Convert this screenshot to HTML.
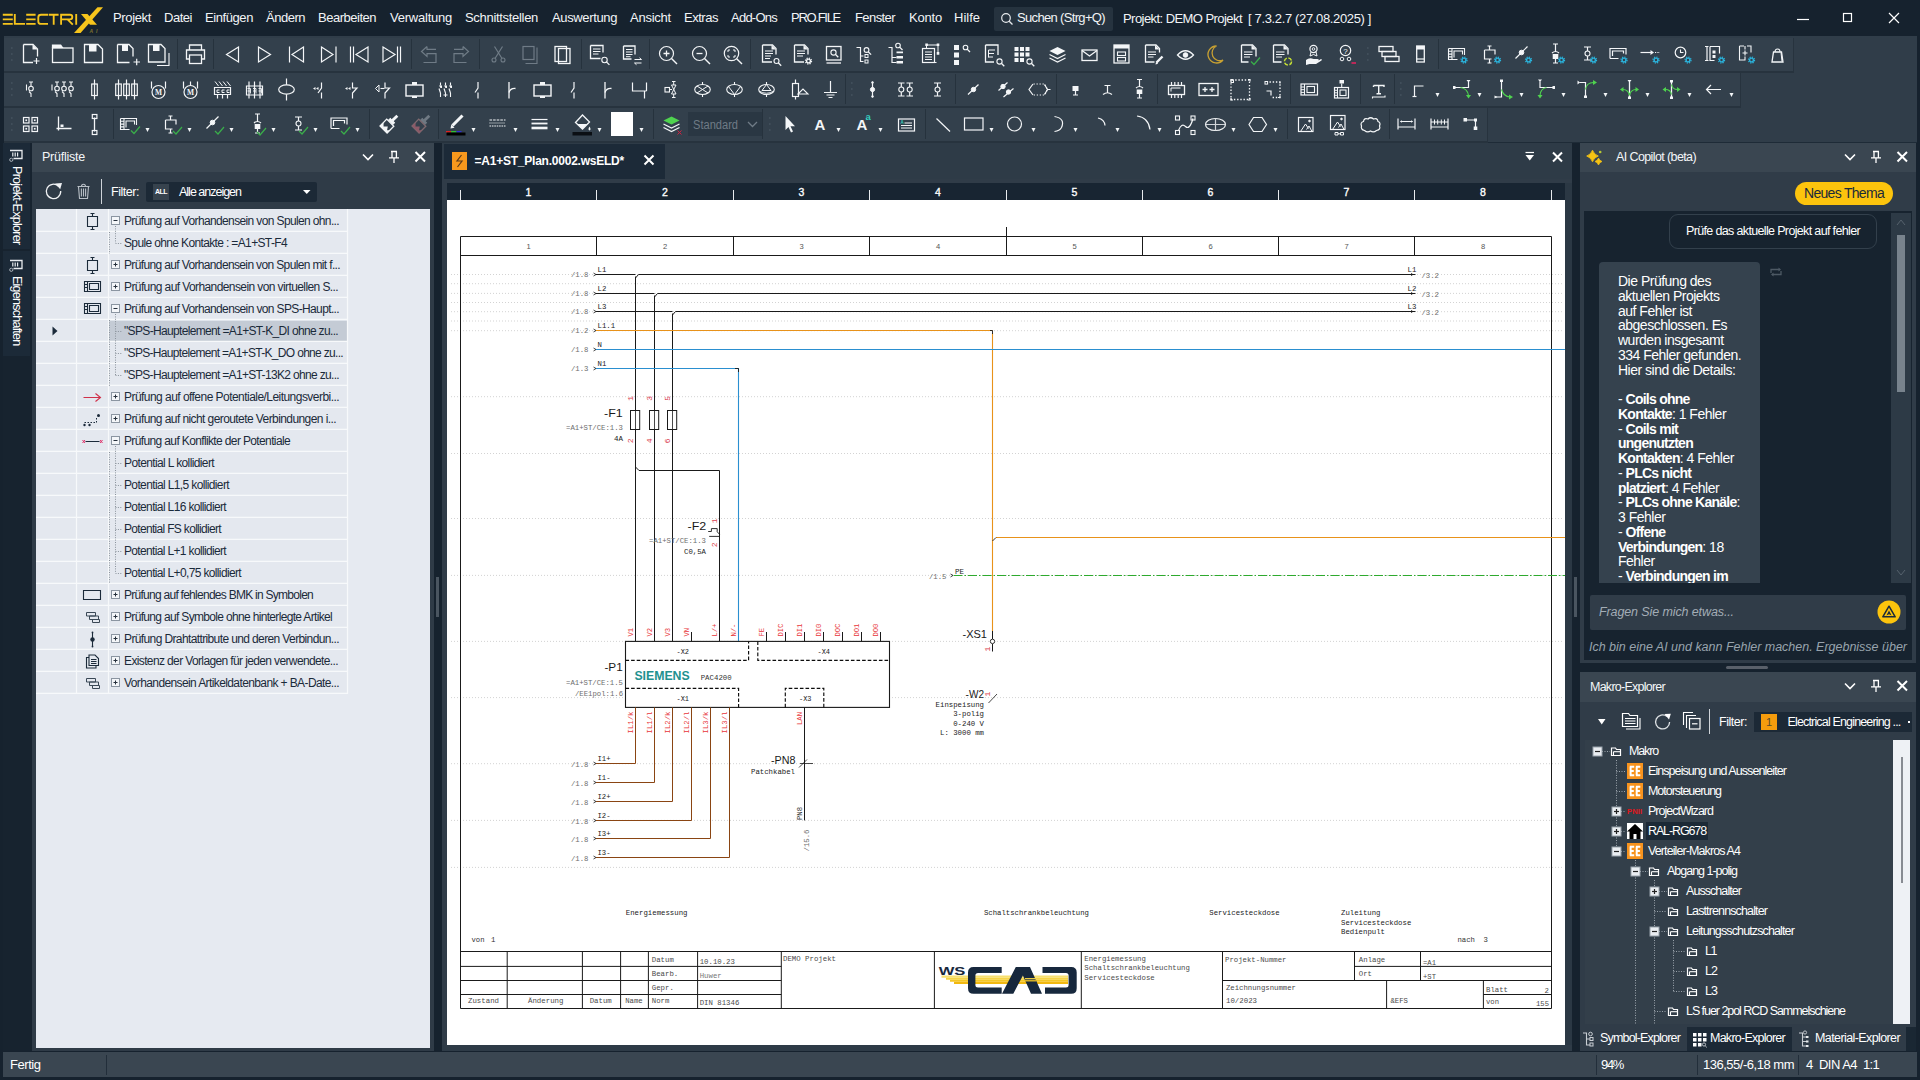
<!DOCTYPE html>
<html><head><meta charset="utf-8"><title>ELECTRIX</title><style>
html,body{margin:0;padding:0;background:#16222e;}
body{width:1920px;height:1080px;overflow:hidden;position:relative;font-family:"Liberation Sans",sans-serif;}
.t{position:absolute;white-space:nowrap;font-family:"Liberation Sans",sans-serif;}
.b{position:absolute;display:block;}
svg{overflow:visible}
svg text{font-family:"Liberation Sans",sans-serif;}
svg text.m{font-family:"Liberation Mono",monospace;}
</style></head><body>
<div class="b" style="left:0px;top:0px;width:1920px;height:36px;background:#16222e;"></div>
<div class="t" style="left:113px;top:8.5px;font-size:13px;line-height:17px;color:#f2f4f6;letter-spacing:-0.352px;">Projekt</div>
<div class="t" style="left:164px;top:8.5px;font-size:13px;line-height:17px;color:#f2f4f6;letter-spacing:-0.470px;">Datei</div>
<div class="t" style="left:205px;top:8.5px;font-size:13px;line-height:17px;color:#f2f4f6;letter-spacing:-0.415px;">Einfügen</div>
<div class="t" style="left:266px;top:8.5px;font-size:13px;line-height:17px;color:#f2f4f6;letter-spacing:-0.487px;">Ändern</div>
<div class="t" style="left:318px;top:8.5px;font-size:13px;line-height:17px;color:#f2f4f6;letter-spacing:-0.488px;">Bearbeiten</div>
<div class="t" style="left:390px;top:8.5px;font-size:13px;line-height:17px;color:#f2f4f6;letter-spacing:-0.232px;">Verwaltung</div>
<div class="t" style="left:465px;top:8.5px;font-size:13px;line-height:17px;color:#f2f4f6;letter-spacing:-0.309px;">Schnittstellen</div>
<div class="t" style="left:552px;top:8.5px;font-size:13px;line-height:17px;color:#f2f4f6;letter-spacing:-0.365px;">Auswertung</div>
<div class="t" style="left:630px;top:8.5px;font-size:13px;line-height:17px;color:#f2f4f6;letter-spacing:-0.233px;">Ansicht</div>
<div class="t" style="left:684px;top:8.5px;font-size:13px;line-height:17px;color:#f2f4f6;letter-spacing:-0.474px;">Extras</div>
<div class="t" style="left:731px;top:8.5px;font-size:13px;line-height:17px;color:#f2f4f6;letter-spacing:-0.758px;">Add-Ons</div>
<div class="t" style="left:791px;top:8.5px;font-size:13px;line-height:17px;color:#f2f4f6;letter-spacing:-1.280px;">PRO.FILE</div>
<div class="t" style="left:855px;top:8.5px;font-size:13px;line-height:17px;color:#f2f4f6;letter-spacing:-0.582px;">Fenster</div>
<div class="t" style="left:909px;top:8.5px;font-size:13px;line-height:17px;color:#f2f4f6;letter-spacing:-0.195px;">Konto</div>
<div class="t" style="left:954px;top:8.5px;font-size:13px;line-height:17px;color:#f2f4f6;letter-spacing:-0.001px;">Hilfe</div>
<div class="b" style="left:994px;top:6.5px;width:119px;height:24px;background:#26333f;border-radius:2px;"></div>
<svg class="b" style="left:999px;top:11px" width="16" height="16" viewBox="0 0 16 16"><circle cx="7" cy="7" r="4.3" fill="none" stroke="#e8ebee" stroke-width="1.2"/><path d="M10.2 10.2L13.5 13.5" stroke="#e8ebee" stroke-width="1.3"/></svg>
<div class="t" style="left:1017px;top:8.5px;font-size:13px;line-height:17px;color:#f2f4f6;letter-spacing:-0.661px;">Suchen (Strg+Q)</div>
<div class="t" style="left:1123px;top:9.5px;font-size:13px;line-height:17px;color:#f2f4f6;letter-spacing:-0.560px;">Projekt: DEMO Projekt</div>
<div class="t" style="left:1248px;top:9.5px;font-size:13px;line-height:17px;color:#f2f4f6;letter-spacing:-0.356px;">[ 7.3.2.7 (27.08.2025) ]</div>
<svg class="b" style="left:1790px;top:8px" width="120" height="22" viewBox="0 0 120 22"><path d="M7 11.5H19" stroke="#fff" stroke-width="1.2"/><rect x="53.5" y="5.5" width="8" height="8" fill="none" stroke="#fff" stroke-width="1.2"/><path d="M99 5L109 15M109 5L99 15" stroke="#fff" stroke-width="1.2"/></svg>
<div class="b" style="left:0px;top:36px;width:1920px;height:105.5px;background:#303d49;"></div>
<div class="b" style="left:0px;top:141.5px;width:1920px;height:1.5px;background:#1e2b37;"></div>
<div class="b" style="left:0px;top:36px;width:4px;height:107px;background:#16222e;"></div>
<div class="b" style="left:1917px;top:36px;width:3px;height:1044px;background:#16222e;"></div>
<div class="b" style="left:4px;top:37.5px;width:1789px;height:33px;background:#33404c;box-shadow:1px 0 0 #27333e,0 2px 0 #27333e,1px 2px 0 #27333e;"></div>
<div class="b" style="left:4px;top:72.5px;width:1736px;height:33.5px;background:#33404c;box-shadow:1px 0 0 #27333e,0 2px 0 #27333e,1px 2px 0 #27333e;"></div>
<div class="b" style="left:4px;top:108px;width:1483px;height:33px;background:#33404c;box-shadow:1px 0 0 #27333e,0 2px 0 #27333e,1px 2px 0 #27333e;"></div>
<svg class="b" style="left:0;top:0" width="1920" height="143" viewBox="0 0 1920 143"><g transform="translate(30.5 54.5)"><path d="M-7 -10H2.5L7 -5.5V2 M-7 -10V8H2.5" fill="none" stroke="#f4f6f8" stroke-width="1.3" /><path d="M2 -10L7 -5H2Z" fill="#f4f6f8"/><path d="M3 6.5H9 M6 3.5V9.5" fill="none" stroke="#f4f6f8" stroke-width="1.2" /></g><g transform="translate(62.5 54.5)"><rect x="-10" y="-6.5" width="20.5" height="14.5" fill="none" stroke="#f4f6f8" stroke-width="1.3"/><path d="M-10.6 -10H-1.5L1 -6.5H-10.6Z" fill="#f4f6f8"/></g><g transform="translate(93.5 54.5)"><path d="M-9 -10H4.5L9 -5.5V8H-9Z" fill="none" stroke="#f4f6f8" stroke-width="1.3" /><path d="M-4.5 -10H3V-3H-4.5Z" fill="#f4f6f8"/></g><g transform="translate(126.5 54.5)"><path d="M-9 -10H2.5L6.5 -6V2 M-9 -10V8H3" fill="none" stroke="#f4f6f8" stroke-width="1.3" /><path d="M-4.5 -10H1.5V-3.5H-4.5Z" fill="#f4f6f8"/><path d="M7 7.5H13.5 M10.2 4.2V10.8" fill="none" stroke="#f4f6f8" stroke-width="1.2" /></g><g transform="translate(158.5 54.5)"><path d="M-10 -10H2.5L6.5 -6V7.5H-10Z" fill="none" stroke="#f4f6f8" stroke-width="1.3" /><path d="M-5.5 -10H1V-3.5H-5.5Z" fill="#f4f6f8"/><path d="M10.5 -1.5V11H-1.5" fill="none" stroke="#f4f6f8" stroke-width="1.1" /></g><g transform="translate(195.5 54.5)"><path d="M-6 -4.5V-9.5H6V-4.5 M-6 4.5H-9V-4.5H9V4.5H6" fill="none" stroke="#f4f6f8" stroke-width="1.3" /><rect x="-6" y="0.5" width="12" height="8.5" fill="none" stroke="#f4f6f8" stroke-width="1.3"/></g><g transform="translate(232.5 54.5)"><path d="M6 -7.5L-6 0L6 7.5Z" fill="none" stroke="#f4f6f8" stroke-width="1.2" /></g><g transform="translate(264.5 54.5)"><path d="M-6 -7.5L6 0L-6 7.5Z" fill="none" stroke="#f4f6f8" stroke-width="1.2" /></g><g transform="translate(296.5 54.5)"><path d="M-7 -8V8" fill="none" stroke="#f4f6f8" stroke-width="1.2" /><path d="M7 -7.5L-4.5 0L7 7.5Z" fill="none" stroke="#f4f6f8" stroke-width="1.2" /></g><g transform="translate(328.5 54.5)"><path d="M7.5 -8V8" fill="none" stroke="#f4f6f8" stroke-width="1.2" /><path d="M-7 -7.5L4.5 0L-7 7.5Z" fill="none" stroke="#f4f6f8" stroke-width="1.2" /></g><g transform="translate(359.5 54.5)"><path d="M-9 -8V8M-6 -8V8" fill="none" stroke="#f4f6f8" stroke-width="1.2" /><path d="M8.5 -7.5L-3.5 0L8.5 7.5Z" fill="none" stroke="#f4f6f8" stroke-width="1.2" /></g><g transform="translate(391.5 54.5)"><path d="M9 -8V8M6 -8V8" fill="none" stroke="#f4f6f8" stroke-width="1.2" /><path d="M-8.5 -7.5L3.5 0L-8.5 7.5Z" fill="none" stroke="#f4f6f8" stroke-width="1.2" /></g><g transform="translate(429.5 54.5)"><path d="M-2.5 -8L-8 -3L-2.5 2V-0.8H6.5V8H-6 M-2.5 -8V-5.2H6.5" fill="none" stroke="#6f7b86" stroke-width="1.2" /></g><g transform="translate(460.5 54.5)"><path d="M2.5 -8L8 -3L2.5 2V-0.8H-6.5V8H6 M2.5 -8V-5.2H-6.5" fill="none" stroke="#6f7b86" stroke-width="1.2" /></g><g transform="translate(498.5 54.5)"><path d="M-4 -8L3.5 4 M4 -8L-3.5 4" fill="none" stroke="#6f7b86" stroke-width="1.2" /><circle cx="-4.5" cy="5.5" r="2" fill="none" stroke="#6f7b86" stroke-width="1.1"/><circle cx="4.5" cy="5.5" r="2" fill="none" stroke="#6f7b86" stroke-width="1.1"/></g><g transform="translate(530.5 54.5)"><rect x="-7.5" y="-8" width="11" height="13" fill="none" stroke="#6f7b86" stroke-width="1.2"/><path d="M6.5 -7V9H-5" fill="none" stroke="#6f7b86" stroke-width="1.1" /></g><g transform="translate(562.5 54.5)"><rect x="-7.5" y="-8" width="11.5" height="15" fill="none" stroke="#f4f6f8" stroke-width="1.3"/><rect x="-4" y="-6" width="11.5" height="15" fill="none" stroke="#f4f6f8" stroke-width="1.3"/></g><g transform="translate(598.5 54.5)"><path d="M-8 -9H4.5V-2 M-8 -9V4H2" fill="none" stroke="#f4f6f8" stroke-width="1.3" /><path d="M-5.5 -5.5H2M-5.5 -3H2M-5.5 -0.5H0" fill="none" stroke="#f4f6f8" stroke-width="1" /><circle cx="6" cy="5.5" r="2.7" fill="none" stroke="#f4f6f8" stroke-width="1.1"/><path d="M7.89 7.39L10.899999999999999 10.399999999999999" fill="none" stroke="#f4f6f8" stroke-width="1.3" /></g><g transform="translate(631.5 54.5)"><path d="M-8 -8.5H3.5V0 M-8 -8.5V4.5H0" fill="none" stroke="#f4f6f8" stroke-width="1.3" /><path d="M-5.5 -5H1M-5.5 -2.5H1M-5.5 0H1M-5.5 2.2H-1" fill="none" stroke="#f4f6f8" stroke-width="1" /><path d="M3 5H10M8 3.3L10 5 M10 8.5H3M5 10.2L3 8.5" fill="none" stroke="#f4f6f8" stroke-width="1" /></g><g transform="translate(667.5 54.5)"><circle cx="-1" cy="-1" r="7" fill="none" stroke="#f4f6f8" stroke-width="1.2"/><path d="M4 4L9.5 9.5" fill="none" stroke="#f4f6f8" stroke-width="1.4" /><path d="M-4 -1H2M-1 -4V2" fill="none" stroke="#f4f6f8" stroke-width="1.3" /></g><g transform="translate(700.5 54.5)"><circle cx="-1" cy="-1" r="7" fill="none" stroke="#f4f6f8" stroke-width="1.2"/><path d="M4 4L9.5 9.5" fill="none" stroke="#f4f6f8" stroke-width="1.4" /><path d="M-4 -1H2" fill="none" stroke="#f4f6f8" stroke-width="1.3" /></g><g transform="translate(732.5 54.5)"><circle cx="-1" cy="-1" r="7.2" fill="none" stroke="#f4f6f8" stroke-width="1.2"/><path d="M4.2 4.2L9.5 9.5" fill="none" stroke="#f4f6f8" stroke-width="1.4" /><path d="M-4.5 -2.5V-4.5H-2.5 M0.5 -4.5H2.5V-2.5 M2.5 0.5V2.5H0.5 M-2.5 2.5H-4.5V0.5" fill="none" stroke="#f4f6f8" stroke-width="1" /></g><g transform="translate(770.5 54.5)"><path d="M-8 -9.5H2L5.5 -6V0 M-8 -9.5V7.5H1.5" fill="none" stroke="#f4f6f8" stroke-width="1.3" /><path d="M1 -9.5L5.5 -5H1Z" fill="#f4f6f8"/><path d="M-5.5 -3.5H2.5M-5.5 -1H2.5M-5.5 1.5H0.5M-5.5 4H-0.5" fill="none" stroke="#f4f6f8" stroke-width="1" /><circle cx="6" cy="6.5" r="2.5" fill="none" stroke="#f4f6f8" stroke-width="1.1"/><path d="M7.75 8.25L10.7 11.2" fill="none" stroke="#f4f6f8" stroke-width="1.3" /></g><g transform="translate(802.5 54.5)"><path d="M-8 -9.5H2L5.5 -6V0 M-8 -9.5V7.5H1.5" fill="none" stroke="#f4f6f8" stroke-width="1.3" /><path d="M1 -9.5L5.5 -5H1Z" fill="#f4f6f8"/><path d="M-5.5 -3.5H2.5M-5.5 -1H2.5M-5.5 1.5H0.5" fill="none" stroke="#f4f6f8" stroke-width="1" /><circle cx="6" cy="6.5" r="1.9" fill="none" stroke="#f4f6f8" stroke-width="1.4"/><circle cx="6" cy="6.5" r="3.0" fill="none" stroke="#f4f6f8" stroke-width="1.3" stroke-dasharray="1.18 1.18"/></g><g transform="translate(833.5 54.5)"><rect x="-7" y="-8" width="14.5" height="13.5" fill="none" stroke="#f4f6f8" stroke-width="1.3"/><path d="M-7 8.5H7.5" fill="none" stroke="#f4f6f8" stroke-width="1.3" /><circle cx="0" cy="-2" r="2.6" fill="none" stroke="#f4f6f8" stroke-width="1.1"/><path d="M1.8199999999999998 -0.18000000000000016L4.800000000000001 2.8000000000000003" fill="none" stroke="#f4f6f8" stroke-width="1.3" /></g><g transform="translate(863.5 54.5)"><path d="M-7 -7H-3V7H0 M-3 1.5H0" fill="none" stroke="#f4f6f8" stroke-width="1.2" /><circle cx="3" cy="-4.5" r="2.4" fill="none" stroke="#f4f6f8" stroke-width="1.1"/><path d="M4.68 -2.8200000000000003L7.6000000000000005 0.10000000000000009" fill="none" stroke="#f4f6f8" stroke-width="1.3" /><rect x="1.5" y="0" width="3" height="3" fill="none" stroke="#f4f6f8" stroke-width="1"/><rect x="1.5" y="5.5" width="3" height="3" fill="none" stroke="#f4f6f8" stroke-width="1"/></g><g transform="translate(895.5 54.5)"><path d="M-7 -7H-3.5V8H1 M-3.5 3H1" fill="none" stroke="#f4f6f8" stroke-width="1.2" /><circle cx="2.5" cy="-9" r="2.3" fill="none" stroke="#f4f6f8" stroke-width="1.1"/><path d="M4.109999999999999 -7.390000000000001L7.0 -4.5" fill="none" stroke="#f4f6f8" stroke-width="1.3" /><path d="M1 1.5H7.5V4H1Z M1 6.5H7.5V9H1Z M1 -3H7.5V-1.2H1Z" fill="#f4f6f8"/></g><g transform="translate(930.5 54.5)"><rect x="-8" y="-6" width="12" height="14" fill="none" stroke="#f4f6f8" stroke-width="1.2"/><path d="M-5.5 -2.5H1.5M-5.5 0H1.5M-5.5 2.5H1.5M-5.5 5H1.5" fill="none" stroke="#f4f6f8" stroke-width="1" /><path d="M-4 -6V-9.5H7.5V-1" fill="none" stroke="#f4f6f8" stroke-width="1" /><path d="M-5.2 -11H-2.6V-8.4H-5.2Z M6.2 -11H8.8V-8.4H6.2Z M6.2 -2.5H8.8V0.2H6.2Z" fill="#f4f6f8"/><path d="M6 8H4.5 M-6 -8" fill="none" stroke="#f4f6f8" stroke-width="1" /></g><g transform="translate(961.5 54.5)"><path d="M-7.5 -9.5H-2.5V-4.5H-7.5Z M-7.5 -2H-2.5V3H-7.5Z M-7.5 5.5H-2.5V10.5H-7.5Z" fill="#f4f6f8"/><circle cx="4" cy="-7" r="2.3" fill="none" stroke="#f4f6f8" stroke-width="1.1"/><path d="M5.609999999999999 -5.390000000000001L8.5 -2.5" fill="none" stroke="#f4f6f8" stroke-width="1.3" /></g><g transform="translate(993.5 54.5)"><path d="M-8 -9.5H4.5V0.5 M-8 -9.5V7.5H0.5" fill="none" stroke="#f4f6f8" stroke-width="1.3" /><path d="M-5 -4.5H1.5 M-5 -4.5V3 M-5 -1H0.5 M-5 2.5H-0.5" fill="none" stroke="#f4f6f8" stroke-width="1" /><circle cx="6" cy="7" r="2.6" fill="none" stroke="#f4f6f8" stroke-width="1.1"/><path d="M7.82 8.82L10.8 11.8" fill="none" stroke="#f4f6f8" stroke-width="1.3" /></g><g transform="translate(1023.5 54.5)"><path d="M-9 -7.5H-5V-3.5H-9Z M-3.5 -7.5H0.5V-3.5H-3.5Z M2 -7.5H6V-3.5H2Z M-9 -2H-5V2H-9Z M-3.5 -2H0.5V2H-3.5Z M2 -2H6V2H2Z M-9 3.5H-5V7.5H-9Z M-3.5 3.5H0.5V7.5H-3.5Z" fill="#f4f6f8"/><circle cx="6" cy="7" r="2.6" fill="none" stroke="#f4f6f8" stroke-width="1.1"/><path d="M7.82 8.82L10.8 11.8" fill="none" stroke="#f4f6f8" stroke-width="1.3" /></g><g transform="translate(1057.5 54.5)"><path d="M0 -7.5L8 -3.5L0 0.5L-8 -3.5Z" fill="#f4f6f8"/><path d="M-8 0L0 4L8 0 M-8 3.5L0 7.5L8 3.5" fill="none" stroke="#f4f6f8" stroke-width="1.2" /></g><g transform="translate(1089.5 54.5)"><rect x="-7.5" y="-4.5" width="15" height="10.5" fill="none" stroke="#f4f6f8" stroke-width="1.3"/><path d="M-7.5 -4L0 1.5L7.5 -4" fill="none" stroke="#f4f6f8" stroke-width="1.3" /></g><g transform="translate(1121.5 54.5)"><rect x="-7.5" y="-9.5" width="15" height="18" fill="none" stroke="#f4f6f8" stroke-width="1.3"/><path d="M-7.5 -9.5H7.5V-6H-7.5Z" fill="#f4f6f8"/><rect x="-4" y="-2.5" width="8" height="3.5" fill="none" stroke="#f4f6f8" stroke-width="1.1"/><rect x="-4" y="3" width="8" height="3.5" fill="none" stroke="#f4f6f8" stroke-width="1.1"/></g><g transform="translate(1153.5 54.5)"><path d="M-8 -9.5H2.5L6 -6V-2 M-8 -9.5V7.5H1" fill="none" stroke="#f4f6f8" stroke-width="1.3" /><path d="M1.5 -9.5L6 -5H1.5Z" fill="#f4f6f8"/><path d="M-5.5 -2.5H2.5M-5.5 0H2.5M-5.5 2.5H0" fill="none" stroke="#f4f6f8" stroke-width="1" /><path d="M3 8L9 2" fill="none" stroke="#f4f6f8" stroke-width="2.4" /><path d="M2 10L2.6 7.2L4.6 9.2Z" fill="#f4f6f8"/></g><g transform="translate(1185.5 54.5)"><path d="M-8 0.5Q0 -8 8 0.5Q0 9 -8 0.5Z" fill="none" stroke="#f4f6f8" stroke-width="1.3" /><circle cx="0" cy="0.5" r="2.3" fill="#f4f6f8" stroke="#f4f6f8" stroke-width="1"/></g><g transform="translate(1215.5 54.5)"><path d="M1 -8.5A8.5 8.5 0 1 0 7.5 5.5A7.5 7.5 0 0 1 1 -8.5Z" fill="none" stroke="#c9a132" stroke-width="1.3" /></g><g transform="translate(1249.5 54.5)"><path d="M-8 -9.5H3L6.5 -6V2 M-8 -9.5V7.5H-1" fill="none" stroke="#f4f6f8" stroke-width="1.3" /><path d="M2 -9.5L6.5 -5H2Z" fill="#f4f6f8"/><path d="M-5.5 -2.5H3M-5.5 0H3M-5.5 2.5H0.5" fill="none" stroke="#f4f6f8" stroke-width="1" /><path d="M1.5 7L4.5 10L10.5 3" fill="none" stroke="#3aae4a" stroke-width="1.2" /></g><g transform="translate(1281.5 54.5)"><path d="M-8 -9.5H3L6.5 -6V0 M-8 -9.5V7.5H0" fill="none" stroke="#f4f6f8" stroke-width="1.3" /><path d="M2 -9.5L6.5 -5H2Z" fill="#f4f6f8"/><path d="M-5.5 -2.5H3M-5.5 0H3M-5.5 2.5H0.5" fill="none" stroke="#f4f6f8" stroke-width="1" /><circle cx="6.5" cy="7" r="3.6" fill="none" stroke="#c6e035" stroke-width="1.5" stroke-dasharray="4 1.65"/></g><g transform="translate(1313.5 54.5)"><circle cx="0" cy="-5.5" r="3.6" fill="none" stroke="#f4f6f8" stroke-width="1.2"/><circle cx="0" cy="-5.5" r="1.3" fill="none" stroke="#f4f6f8" stroke-width="0.9"/><path d="M-2.5 -2.5L-3.5 1.5L0 0L3.5 1.5L2.5 -2.5" fill="none" stroke="#f4f6f8" stroke-width="1" /><path d="M-7.5 5.5Q-4 2.5 0 4.5H4Q6 4.5 5 6L7.5 4.5Q9 4.5 8 6L2.5 9.5H-4L-7.5 10.5Z" fill="#f4f6f8"/></g><g transform="translate(1346.5 54.5)"><circle cx="-1" cy="-4" r="5.2" fill="none" stroke="#f4f6f8" stroke-width="1.2"/><text x="-1" y="-1" font-size="8" fill="#f4f6f8" text-anchor="middle">?</text><circle cx="-4.5" cy="4.5" r="1.8" fill="none" stroke="#f4f6f8" stroke-width="1"/><circle cx="2.5" cy="4.5" r="1.8" fill="none" stroke="#f4f6f8" stroke-width="1"/><path d="M5 8.5H9.5" fill="none" stroke="#e0245e" stroke-width="1.6" /></g><path d="M1367 48h1.6M1367 54h1.6M1367 60h1.6" stroke="#46535f" stroke-width="1.6"/><g transform="translate(1388.5 54.5)"><rect x="-9.5" y="-8" width="14" height="5" fill="none" stroke="#f4f6f8" stroke-width="1.3"/><rect x="-6.5" y="-3" width="14" height="5" fill="none" stroke="#f4f6f8" stroke-width="1.3"/><rect x="-3.5" y="2" width="14" height="5" fill="none" stroke="#f4f6f8" stroke-width="1.3"/></g><g transform="translate(1420.5 54.5)"><rect x="-3.8" y="-8.5" width="7.6" height="16" fill="none" stroke="#f4f6f8" stroke-width="1.3"/><path d="M-3.8 -8.5H3.8V-5H-3.8Z" fill="#f4f6f8"/><path d="M-3.8 4.5H3.8" fill="none" stroke="#f4f6f8" stroke-width="1.2" /></g><g transform="translate(1457.5 54.5)"><path d="M-9 -6H7V0.5 M-9 -6V5H0 M-5.5 -6V5 M-9 -3.2H-5.5M-9 -0.4H-5.5M-9 2.4H-5.5 M-3.5 3V-3.5H5V0" fill="none" stroke="#f4f6f8" stroke-width="1.1" /><circle cx="6.5" cy="5.5" r="1.9" fill="none" stroke="#2bb3dc" stroke-width="1.4"/><circle cx="6.5" cy="5.5" r="3.0" fill="none" stroke="#2bb3dc" stroke-width="1.3" stroke-dasharray="1.18 1.18"/></g><g transform="translate(1491.5 54.5)"><path d="M-7 -4.5H3.5V0 M-7 -4.5V4.5H0 M-2 -8.5V-4.5 M-2 4.5V8.5 M-4 -8.5H0 M-4 8.5H0" fill="none" stroke="#f4f6f8" stroke-width="1.2" /><circle cx="6" cy="5.5" r="1.9" fill="none" stroke="#2bb3dc" stroke-width="1.4"/><circle cx="6" cy="5.5" r="3.0" fill="none" stroke="#2bb3dc" stroke-width="1.3" stroke-dasharray="1.18 1.18"/></g><g transform="translate(1523.5 54.5)"><path d="M-8 4L4 -8" fill="none" stroke="#f4f6f8" stroke-width="1.2" /><circle cx="-2" cy="-2" r="2.3" fill="#f4f6f8" stroke="#f4f6f8" stroke-width="1"/><circle cx="5" cy="5.5" r="1.9" fill="none" stroke="#2bb3dc" stroke-width="1.4"/><circle cx="5" cy="5.5" r="3.0" fill="none" stroke="#2bb3dc" stroke-width="1.3" stroke-dasharray="1.18 1.18"/></g><g transform="translate(1555.5 54.5)"><path d="M-2.5 -10.5H2.5 M0 -10.5V-3 M-3.5 -1.5Q0 -4.5 3.5 -1.5 M0 4V8 M-2.5 8.5H2.5" fill="none" stroke="#f4f6f8" stroke-width="1.2" /><path d="M-2.8 -0.5H2.8V4.5H-2.8Z" fill="#f4f6f8"/><circle cx="6" cy="5.5" r="1.9" fill="none" stroke="#2bb3dc" stroke-width="1.4"/><circle cx="6" cy="5.5" r="3.0" fill="none" stroke="#2bb3dc" stroke-width="1.3" stroke-dasharray="1.18 1.18"/></g><g transform="translate(1587.5 54.5)"><path d="M-3.5 -7.5H3.5 M0 -7.5V-3.5 M0 1.5V5.5 M-3.5 5.5H3.5" fill="none" stroke="#f4f6f8" stroke-width="1.2" /><circle cx="0" cy="-1" r="2.5" fill="none" stroke="#f4f6f8" stroke-width="1.1"/><circle cx="6" cy="5.5" r="1.9" fill="none" stroke="#2bb3dc" stroke-width="1.4"/><circle cx="6" cy="5.5" r="3.0" fill="none" stroke="#2bb3dc" stroke-width="1.3" stroke-dasharray="1.18 1.18"/></g><g transform="translate(1618.5 54.5)"><path d="M-8.5 4V-6H7.5V0 M-8.5 4H0 M-6 1.5V-3.5H5V-1" fill="none" stroke="#f4f6f8" stroke-width="1.2" /><circle cx="5.5" cy="5.5" r="1.9" fill="none" stroke="#2bb3dc" stroke-width="1.4"/><circle cx="5.5" cy="5.5" r="3.0" fill="none" stroke="#2bb3dc" stroke-width="1.3" stroke-dasharray="1.18 1.18"/></g><g transform="translate(1650.5 54.5)"><path d="M-10 -2H0.5" fill="none" stroke="#f4f6f8" stroke-width="1.2" /><path d="M0 -4.5L3.5 -2L0 0.5Z" fill="#f4f6f8"/><path d="M4.5 -2H9.5" fill="none" stroke="#f4f6f8" stroke-width="1.1" stroke-dasharray="1.2 1.2"/><circle cx="5.5" cy="5.5" r="1.9" fill="none" stroke="#2bb3dc" stroke-width="1.4"/><circle cx="5.5" cy="5.5" r="3.0" fill="none" stroke="#2bb3dc" stroke-width="1.3" stroke-dasharray="1.18 1.18"/></g><g transform="translate(1682.5 54.5)"><circle cx="-2" cy="-2" r="5.3" fill="none" stroke="#f4f6f8" stroke-width="1.2"/><path d="M-2 -5V-2H1" fill="none" stroke="#f4f6f8" stroke-width="1.1" /><circle cx="5.5" cy="5.5" r="1.9" fill="none" stroke="#2bb3dc" stroke-width="1.4"/><circle cx="5.5" cy="5.5" r="3.0" fill="none" stroke="#2bb3dc" stroke-width="1.3" stroke-dasharray="1.18 1.18"/></g><g transform="translate(1714.5 54.5)"><path d="M-9.5 -8H-6 M-9.5 6H-6 M-7.5 -8V6 M-4.5 -8H5V-1 M-4.5 -8V6H0" fill="none" stroke="#f4f6f8" stroke-width="1.2" /><path d="M-2 -4H1V-1H-2Z M-2 0.5H1V3.5H-2Z" fill="#f4f6f8"/><circle cx="7" cy="5.5" r="1.9" fill="none" stroke="#2bb3dc" stroke-width="1.4"/><circle cx="7" cy="5.5" r="3.0" fill="none" stroke="#2bb3dc" stroke-width="1.3" stroke-dasharray="1.18 1.18"/></g><g transform="translate(1746.5 54.5)"><path d="M-7 -8.5H-2.5 M0.5 -8.5H4.5V-2 M-7 -8.5V5.5H-1 M-1.5 -8.5V-5 M-1.5 2V5.5" fill="none" stroke="#f4f6f8" stroke-width="1.1" /><path d="M-4 -1.5H1 M-1.5 -4V1" fill="none" stroke="#f4f6f8" stroke-width="1.1" /><circle cx="5" cy="5.5" r="1.9" fill="none" stroke="#2bb3dc" stroke-width="1.4"/><circle cx="5" cy="5.5" r="3.0" fill="none" stroke="#2bb3dc" stroke-width="1.3" stroke-dasharray="1.18 1.18"/></g><g transform="translate(1777.5 54.5)"><path d="M-4 -2.5H4L5.5 7.5H-5.5Z" fill="none" stroke="#f4f6f8" stroke-width="1.3" /><path d="M-2.5 -2.5C-2.5 -6.5 2.5 -6.5 2.5 -2.5" fill="none" stroke="#f4f6f8" stroke-width="1.1" /><path d="M3.5 -2L4.5 7" fill="none" stroke="#f4f6f8" stroke-width="1" /></g><path d="M177.5 39V69" stroke="#26323d" stroke-width="1"/><path d="M213.5 39V69" stroke="#26323d" stroke-width="1"/><path d="M411.5 39V69" stroke="#26323d" stroke-width="1"/><path d="M479.5 39V69" stroke="#26323d" stroke-width="1"/><path d="M581.5 39V69" stroke="#26323d" stroke-width="1"/><path d="M649.5 39V69" stroke="#26323d" stroke-width="1"/><path d="M750.5 39V69" stroke="#26323d" stroke-width="1"/><path d="M1438.5 39V69" stroke="#26323d" stroke-width="1"/><path d="M11 48h1.6M11 54h1.6M11 60h1.6" stroke="#46535f" stroke-width="1.6"/><g transform="translate(30.5 89.5)"><path d="M-4 -5V1" fill="none" stroke="#f4f6f8" stroke-width="1.1" /><circle cx="0.5" cy="-1" r="2.3" fill="none" stroke="#f4f6f8" stroke-width="1.1"/><path d="M0.5 -7.5V-3.3 M-1.5 -7.5H2.5 M-1.5 2L0.5 4V7.5" fill="none" stroke="#f4f6f8" stroke-width="1.1" /></g><g transform="translate(62.5 89.5)"><path d="M-10.5 -5V1" fill="none" stroke="#f4f6f8" stroke-width="1.1" /><circle cx="-5.5" cy="-1" r="2.3" fill="none" stroke="#f4f6f8" stroke-width="1.1"/><path d="M-5.5 -7.5V-3.3 M-7.5 -7.5H-3.5 M-7.5 2L-5.5 4V7.5" fill="none" stroke="#f4f6f8" stroke-width="1.1" /><circle cx="1.5" cy="-1" r="2.3" fill="none" stroke="#f4f6f8" stroke-width="1.1"/><path d="M1.5 -7.5V-3.3 M-0.5 -7.5H3.5 M-0.5 2L1.5 4V7.5" fill="none" stroke="#f4f6f8" stroke-width="1.1" /><circle cx="8.5" cy="-1" r="2.3" fill="none" stroke="#f4f6f8" stroke-width="1.1"/><path d="M8.5 -7.5V-3.3 M6.5 -7.5H10.5 M6.5 2L8.5 4V7.5" fill="none" stroke="#f4f6f8" stroke-width="1.1" /></g><g transform="translate(94.5 89.5)"><rect x="-2.8" y="-5.5" width="5.6" height="11.5" fill="none" stroke="#f4f6f8" stroke-width="1.2"/><path d="M0 -10V10" fill="none" stroke="#f4f6f8" stroke-width="1.2" /></g><g transform="translate(126.5 89.5)"><rect x="-10.8" y="-5.5" width="5.6" height="11.5" fill="none" stroke="#f4f6f8" stroke-width="1.2"/><path d="M-8 -10V10" fill="none" stroke="#f4f6f8" stroke-width="1.2" /><rect x="-2.8" y="-5.5" width="5.6" height="11.5" fill="none" stroke="#f4f6f8" stroke-width="1.2"/><path d="M0 -10V10" fill="none" stroke="#f4f6f8" stroke-width="1.2" /><rect x="5.2" y="-5.5" width="5.6" height="11.5" fill="none" stroke="#f4f6f8" stroke-width="1.2"/><path d="M8 -10V10" fill="none" stroke="#f4f6f8" stroke-width="1.2" /></g><g transform="translate(158.5 89.5)"><circle cx="0" cy="2.5" r="6.5" fill="none" stroke="#f4f6f8" stroke-width="1.2"/><path d="M-7 -8V-1 M7 -8V-1" fill="none" stroke="#f4f6f8" stroke-width="1.2" /><text x="0" y="5.5" font-size="7.5" font-family="Liberation Serif,serif" font-weight="bold" fill="#f4f6f8" text-anchor="middle" style="font-family:'Liberation Serif',serif">M</text></g><g transform="translate(190.5 89.5)"><circle cx="0" cy="2.5" r="6.5" fill="none" stroke="#f4f6f8" stroke-width="1.2"/><path d="M-7 -8V-1 M7 -8V-1" fill="none" stroke="#f4f6f8" stroke-width="1.2" /><text x="0" y="5.5" font-size="7.5" font-family="Liberation Serif,serif" font-weight="bold" fill="#f4f6f8" text-anchor="middle" style="font-family:'Liberation Serif',serif">M</text><path d="M0 -8V-4" fill="none" stroke="#f4f6f8" stroke-width="1.2" /></g><g transform="translate(222.5 89.5)"><path d="M-8 -2H8V5H-8Z" fill="none" stroke="#f4f6f8" stroke-width="1.2" /><path d="M-5.5 0.5H-3M-0.5 0.5H2M4.5 0.5H7 M-5.5 0.5V3H-3 M-0.5 0.5V3H2 M4.5 0.5V3H7" fill="none" stroke="#f4f6f8" stroke-width="1" /><path d="M-5 5V9 M0 5V9 M5 5V9" fill="none" stroke="#f4f6f8" stroke-width="1.2" /><path d="M-7.5 -8L-4 -3.5 M-3.5 -8L0 -3.5 M0.5 -8L4 -3.5 M4.5 -8L8 -3.5" fill="none" stroke="#f4f6f8" stroke-width="1" /></g><g transform="translate(254.5 89.5)"><path d="M-8 -3.5H8V5.5H-8Z" fill="none" stroke="#f4f6f8" stroke-width="1.2" /><path d="M-5.5 -8V9 M0 -8V9 M5.5 -8V9" fill="none" stroke="#f4f6f8" stroke-width="1.2" /><path d="M-7 -1H-4V1.5H-7M-4 1.5V4 M-1.5 -1H1.5V1.5H-1.5M1.5 1.5V4 M4 -1H7V1.5H4M7 1.5V4" fill="none" stroke="#f4f6f8" stroke-width="0.9" /></g><g transform="translate(286.5 89.5)"><ellipse cx="0" cy="0" rx="7.8" ry="4.7" fill="none" stroke="#f4f6f8" stroke-width="1.2"/><path d="M0 -11V-4.7 M0 4.7V11" fill="none" stroke="#f4f6f8" stroke-width="1.2" /></g><g transform="translate(318.5 89.5)"><path d="M3 -7V-1.5L-0.5 3.5 M3 3V9" fill="none" stroke="#f4f6f8" stroke-width="1.2" /><path d="M-5.5 -1L-3 -2.5V0.5Z M-2.5 -1L0 -2.5V0.5Z" fill="#f4f6f8"/></g><g transform="translate(350.5 89.5)"><path d="M2 -7V-1.5H6.5L2 3.5V9" fill="none" stroke="#f4f6f8" stroke-width="1.2" /><path d="M-5.5 -1L-3 -2.5V0.5Z M-2.5 -1L0 -2.5V0.5Z" fill="#f4f6f8"/></g><g transform="translate(382.5 89.5)"><path d="M2.5 -7V-1.5H7L2.5 3.5V9" fill="none" stroke="#f4f6f8" stroke-width="1.2" /><path d="M-2 -1H2" fill="none" stroke="#f4f6f8" stroke-width="1.1" /><path d="M-7 -1L-3.5 -4.5L-3.5 2.5Z" fill="none" stroke="#f4f6f8" stroke-width="1" /></g><g transform="translate(414.5 89.5)"><rect x="-8.5" y="-4.5" width="17" height="11" fill="none" stroke="#f4f6f8" stroke-width="1.4"/><path d="M-2.5 -7.5H2.5V-4.5H-2.5Z M-2.5 6.5H2.5V8.5H-2.5Z" fill="#f4f6f8"/></g><g transform="translate(446.5 89.5)"><path d="M-6 -7V-4 M-1 -7V-4 M4 -7V-4 M-6 3.5V7.5 M-1 3.5V7.5 M4 3.5V7.5 M-7.5 -1L-6 3.5 M-2.5 -1L-1 3.5 M2.5 -1L4 3.5" fill="none" stroke="#f4f6f8" stroke-width="1.1" /><path d="M-7.5 -4H-4.5V-1.5H-6Z M-2.5 -4H0.5V-1.5H-1Z M2.5 -4H5.5V-1.5H4Z" fill="#f4f6f8"/><path d="M-3 5.5H1 M-1 3.5V7.5" fill="none" stroke="#f4f6f8" stroke-width="1" /></g><g transform="translate(477.5 89.5)"><path d="M0.5 -7.5V-1.5L-2.5 3 M0.5 3V9" fill="none" stroke="#f4f6f8" stroke-width="1.2" /></g><g transform="translate(511.5 89.5)"><path d="M-2.5 -7.5V9" fill="none" stroke="#f4f6f8" stroke-width="1.3" /><path d="M-2.5 3Q-1 -1.5 4 -1" fill="none" stroke="#f4f6f8" stroke-width="1.3" /></g><g transform="translate(542.5 89.5)"><rect x="-8.5" y="-4.5" width="17" height="11" fill="none" stroke="#f4f6f8" stroke-width="1.4"/><path d="M-2.5 -7.5H2.5V-4.5H-2.5Z M-2.5 6.5H2.5V8.5H-2.5Z" fill="#f4f6f8"/></g><g transform="translate(573.5 89.5)"><path d="M0.5 -7.5V-1.5L-2.5 3 M0.5 3V9" fill="none" stroke="#f4f6f8" stroke-width="1.2" /></g><g transform="translate(607.5 89.5)"><path d="M-2.5 -7.5V9" fill="none" stroke="#f4f6f8" stroke-width="1.3" /><path d="M-2.5 3Q-1 -1.5 4 -1" fill="none" stroke="#f4f6f8" stroke-width="1.3" /></g><g transform="translate(639.5 89.5)"><path d="M-7 -7V1.5H7 M7 -7V1.5 M5 1.5V9" fill="none" stroke="#f4f6f8" stroke-width="1.2" /></g><g transform="translate(670.5 89.5)"><rect x="-5.5" y="-2" width="4.5" height="4.5" fill="none" stroke="#f4f6f8" stroke-width="1.1"/><path d="M-1 0H1.5 M1 -4.5L5.5 4.5H1L5.5 -4.5Z M3.2 -8V-4.5 M3.2 4.5V8 M1.5 -8H5M1.5 8H5" fill="none" stroke="#f4f6f8" stroke-width="1" /></g><g transform="translate(702.5 89.5)"><ellipse cx="0" cy="0" rx="7.8" ry="5" fill="none" stroke="#f4f6f8" stroke-width="1.1"/><path d="M0 -7.5V-5 M0 5V7.5" fill="none" stroke="#f4f6f8" stroke-width="1.1" /><path d="M-5.5 -3.5L5.5 3.5 M5.5 -3.5L-5.5 3.5" fill="none" stroke="#f4f6f8" stroke-width="1" /></g><g transform="translate(734.5 89.5)"><ellipse cx="0" cy="0" rx="7.8" ry="5" fill="none" stroke="#f4f6f8" stroke-width="1.1"/><path d="M0 -7.5V-5 M0 5V7.5" fill="none" stroke="#f4f6f8" stroke-width="1.1" /><path d="M-6 -3L0 5L6 -3" fill="none" stroke="#f4f6f8" stroke-width="1" /></g><g transform="translate(766.5 89.5)"><ellipse cx="0" cy="0" rx="7.8" ry="5" fill="none" stroke="#f4f6f8" stroke-width="1.1"/><path d="M0 -7.5V-5 M0 5V7.5" fill="none" stroke="#f4f6f8" stroke-width="1.1" /><path d="M-4.5 1L0 -5L4.5 1Z" fill="none" stroke="#f4f6f8" stroke-width="1" /><path d="M-7.5 1.5Q0 6 7.5 1.5" fill="none" stroke="#f4f6f8" stroke-width="0.9" /></g><g transform="translate(799.5 89.5)"><rect x="-7" y="-6" width="6" height="13" fill="none" stroke="#f4f6f8" stroke-width="1.2"/><path d="M-4 -10V-6 M-4 7V10" fill="none" stroke="#f4f6f8" stroke-width="1.2" /><path d="M-1.5 4.5L3.5 -0.5L8.5 4.5Z" fill="none" stroke="#f4f6f8" stroke-width="1.1" /></g><g transform="translate(830.5 89.5)"><path d="M0 -8.5V3 M-6.5 3H6.5 M-4 5.5H4 M-2 8H2" fill="none" stroke="#f4f6f8" stroke-width="1.2" /></g><path d="M845.5 74V104" stroke="#26323d" stroke-width="1"/><path d="M851 83h1.6M851 89h1.6M851 95h1.6" stroke="#46535f" stroke-width="1.6"/><g transform="translate(872.5 89.5)"><path d="M0 -7V7" fill="none" stroke="#f4f6f8" stroke-width="1.2" /><circle cx="0" cy="0" r="2.1" fill="#f4f6f8" stroke="#f4f6f8" stroke-width="1"/><circle cx="0" cy="-7" r="0.9" fill="#f4f6f8" stroke="#f4f6f8" stroke-width="0.8"/><circle cx="0" cy="7" r="0.9" fill="#f4f6f8" stroke="#f4f6f8" stroke-width="0.8"/></g><g transform="translate(905.5 89.5)"><path d="M-7.5 -6.5H-1 M1 -6.5H7.5 M-7.5 6.5H-1 M1 6.5H7.5 M-4.2 -6.5V-2.5 M4.2 -6.5V-2.5 M-4.2 2.5V6.5 M4.2 2.5V6.5" fill="none" stroke="#f4f6f8" stroke-width="1.2" /><circle cx="-4.2" cy="0" r="2.5" fill="none" stroke="#f4f6f8" stroke-width="1.1"/><circle cx="4.2" cy="0" r="2.5" fill="none" stroke="#f4f6f8" stroke-width="1.1"/></g><g transform="translate(937.5 89.5)"><path d="M-3.5 -6.5H3.5 M-3.5 6.5H3.5 M0 -6.5V-2.5 M0 2.5V6.5" fill="none" stroke="#f4f6f8" stroke-width="1.2" /><circle cx="0" cy="0" r="2.5" fill="none" stroke="#f4f6f8" stroke-width="1.1"/></g><path d="M955.5 74V104" stroke="#26323d" stroke-width="1"/><g transform="translate(973.5 89.5)"><path d="M-5.5 5L5 -5" fill="none" stroke="#f4f6f8" stroke-width="1.2" /><circle cx="0" cy="0" r="2.2" fill="#f4f6f8" stroke="#f4f6f8" stroke-width="1"/></g><g transform="translate(1005.5 89.5)"><path d="M-7 1L2 -7 M-2 7.5L8 -1" fill="none" stroke="#f4f6f8" stroke-width="1.2" /><circle cx="-2.5" cy="-3" r="2.2" fill="#f4f6f8" stroke="#f4f6f8" stroke-width="1"/><circle cx="3" cy="2.5" r="2.2" fill="#f4f6f8" stroke="#f4f6f8" stroke-width="1"/></g><g transform="translate(1039.5 89.5)"><path d="M-6 -5.5H5L8 0L5 5.5H-6" fill="none" stroke="#f4f6f8" stroke-width="1.2" stroke-dasharray="1.3 1.7"/><path d="M-6.5 -5.5L-10.5 0L-6.5 5.5" fill="none" stroke="#f4f6f8" stroke-width="1.2" /><path d="M5 -5L8 0L5 5 M8 0H11" fill="none" stroke="#f4f6f8" stroke-width="1.2" /></g><path d="M1056.5 74V104" stroke="#26323d" stroke-width="1"/><g transform="translate(1075.5 89.5)"><path d="M-3 -3.5H3V1.5H-3Z" fill="#f4f6f8"/><path d="M0 1.5V5 M-2.5 5.5H2.5" fill="none" stroke="#f4f6f8" stroke-width="1.2" /></g><g transform="translate(1107.5 89.5)"><path d="M-3 -4H3 M0 -4V3 M-4.5 5Q0 1.5 4.5 5" fill="none" stroke="#f4f6f8" stroke-width="1.2" /></g><g transform="translate(1139.5 89.5)"><path d="M-2.5 -10H2.5 M0 -10V-3 M-3.5 -1.5Q0 -4.5 3.5 -1.5 M0 4V8 M-2.5 8.5H2.5" fill="none" stroke="#f4f6f8" stroke-width="1.2" /><path d="M-2.8 0H2.8V4.5H-2.8Z" fill="#f4f6f8"/></g><path d="M1157.5 74V104" stroke="#26323d" stroke-width="1"/><g transform="translate(1176.5 89.5)"><rect x="-8" y="-4" width="16" height="9" fill="none" stroke="#f4f6f8" stroke-width="1.3"/><path d="M-5 -7.5V-4M-1.7 -7.5V-4M1.7 -7.5V-4M5 -7.5V-4 M-5 5V8.5M-1.7 5V8.5M1.7 5V8.5M5 5V8.5" fill="none" stroke="#f4f6f8" stroke-width="1.2" /><path d="M-5.5 2V-1.5H4" fill="none" stroke="#f4f6f8" stroke-width="1" /></g><g transform="translate(1208.5 89.5)"><rect x="-9.5" y="-6" width="19" height="12" fill="none" stroke="#f4f6f8" stroke-width="1.3"/><path d="M-6 0H-1 M-3.5 -2.5V2.5 M1 0H6 M3.5 -2.5V2.5" fill="none" stroke="#f4f6f8" stroke-width="1.3" /></g><g transform="translate(1240.5 89.5)"><path d="M-8.5 -9.5H9V10H-9.5V-8" fill="none" stroke="#f4f6f8" stroke-width="1.3" stroke-dasharray="1.4 1.8"/><path d="M-9.5 -8V-10H-7.5 M9.5 -8V-10H7.5 M-9.5 8.5V10.5H-7.5 M9.5 8.5V10.5H7.5" fill="none" stroke="#f4f6f8" stroke-width="1.2" /><rect x="-9.5" y="-9.5" width="2.5" height="2.5" fill="none" stroke="#f4f6f8" stroke-width="1"/></g><g transform="translate(1272.5 89.5)"><path d="M-3 -7.5H7.5V8H-1.5" fill="none" stroke="#f4f6f8" stroke-width="1.3" stroke-dasharray="1.4 1.8"/><rect x="-7.5" y="-8" width="2.6" height="2.6" fill="none" stroke="#f4f6f8" stroke-width="1"/><path d="M-6 1.5H-1.5V6" fill="none" stroke="#f4f6f8" stroke-width="1.2" /><path d="M7.5 -7.5V-6 M7.5 8H5.5 M7.5 6V8" fill="none" stroke="#f4f6f8" stroke-width="1.2" /></g><path d="M1290.5 74V104" stroke="#26323d" stroke-width="1"/><g transform="translate(1309.5 89.5)"><rect x="-8.5" y="-5.5" width="16.5" height="11" fill="none" stroke="#f4f6f8" stroke-width="1.2"/><path d="M-5 -5.5V5.5 M-8.5 -2.5H-5M-8.5 0.2H-5M-8.5 2.9H-5" fill="none" stroke="#f4f6f8" stroke-width="1" /><rect x="-2.5" y="-3" width="7.5" height="6" fill="none" stroke="#f4f6f8" stroke-width="1.1"/></g><g transform="translate(1341.5 89.5)"><rect x="-7" y="-2" width="14" height="10.5" fill="none" stroke="#f4f6f8" stroke-width="1.2"/><path d="M-4 -2V8.5 M-7 0.8H-4M-7 3.3H-4M-7 5.8H-4" fill="none" stroke="#f4f6f8" stroke-width="1" /><rect x="-1.5" y="0.5" width="6" height="5.5" fill="none" stroke="#f4f6f8" stroke-width="1.1"/><path d="M-2 -9.5H2.5V-6H-2Z" fill="#f4f6f8"/><path d="M0.2 -6V-2" fill="none" stroke="#f4f6f8" stroke-width="1.1" /></g><path d="M1360.5 74V104" stroke="#26323d" stroke-width="1"/><g transform="translate(1378.5 89.5)"><path d="M-5 -4V-2.5 M-5 -4H5.5V-2.5 M0.2 -4V4 M-2 4.2H2.5" fill="none" stroke="#f4f6f8" stroke-width="1.4" /><path d="M-6 9V7.5H6.5V6" fill="none" stroke="#f4f6f8" stroke-width="1.1" /></g><path d="M1394.5 74V104" stroke="#26323d" stroke-width="1"/><path d="M1400 83h1.6M1400 89h1.6M1400 95h1.6" stroke="#46535f" stroke-width="1.6"/><g transform="translate(1418.5 89.5)"><path d="M-4 7V-3.5H5" fill="none" stroke="#f4f6f8" stroke-width="1.2" /><path d="M-6 7H-2" fill="none" stroke="#f4f6f8" stroke-width="1.2" /><path d="M17 3.5H21L19 7.5Z" fill="#f4f6f8"/></g><g transform="translate(1461.5 89.5)"><path d="M-7 -2H7V-8" fill="none" stroke="#f4f6f8" stroke-width="1.2" /><path d="M5 -9.5H9L7 -7Z M-8.5 -3.5H-6V-0.5H-8.5Z" fill="#f4f6f8"/><path d="M-1 -2Q6 -1 7 6" fill="none" stroke="#4fd34f" stroke-width="1.2" /><path d="M4.5 5.5H9.5L7 9Z" fill="#4fd34f"/><path d="M16 3.5H20L18 7.5Z" fill="#f4f6f8"/></g><g transform="translate(1503.5 89.5)"><path d="M-7.5 7.5H-2V-9" fill="none" stroke="#f4f6f8" stroke-width="1.2" /><path d="M-3.5 -10H-0.5V-7.5H-3.5Z M-9 6L-6 7.5L-9 9Z" fill="#f4f6f8"/><path d="M-2 0Q0 7 6.5 7.5" fill="none" stroke="#4fd34f" stroke-width="1.2" /><path d="M5.5 5L9.5 7.5L5.5 10Z" fill="#4fd34f"/><path d="M16 3.5H20L18 7.5Z" fill="#f4f6f8"/></g><g transform="translate(1545.5 89.5)"><path d="M-5.5 -8V-2H8" fill="none" stroke="#f4f6f8" stroke-width="1.2" /><path d="M-7.5 -10H-3.5L-5.5 -7.5Z M7 -3.5H9.5V-0.5H7Z" fill="#f4f6f8"/><path d="M1 -2Q-5 -1 -5.5 6" fill="none" stroke="#4fd34f" stroke-width="1.2" /><path d="M-8 5.5H-3L-5.5 9Z" fill="#4fd34f"/><path d="M16 3.5H20L18 7.5Z" fill="#f4f6f8"/></g><g transform="translate(1587.5 89.5)"><path d="M-8 -7H-2V7" fill="none" stroke="#f4f6f8" stroke-width="1.2" /><path d="M-10 -9L-7.5 -7L-10 -5Z M-3.5 6H-0.5V8.5H-3.5Z" fill="#f4f6f8"/><path d="M-2 0Q-1 -7 6 -7" fill="none" stroke="#4fd34f" stroke-width="1.2" /><path d="M5.5 -9.5L9.5 -7L5.5 -4.5Z" fill="#4fd34f"/><path d="M16 3.5H20L18 7.5Z" fill="#f4f6f8"/></g><g transform="translate(1629.5 89.5)"><path d="M0 -8.5V8" fill="none" stroke="#f4f6f8" stroke-width="1.3" /><path d="M-2 -9.5H2L0 -7Z M-1.5 7H1.5V9.5H-1.5Z" fill="#f4f6f8"/><path d="M0 6Q-1 0 -6.5 0 M0 6Q1 0 6.5 0" fill="none" stroke="#4fd34f" stroke-width="1.2" /><path d="M-6 -2.5L-9.5 0L-6 2.5Z M6 -2.5L9.5 0L6 2.5Z" fill="#4fd34f"/><path d="M16 3.5H20L18 7.5Z" fill="#f4f6f8"/></g><g transform="translate(1671.5 89.5)"><path d="M0 -8.5V8" fill="none" stroke="#f4f6f8" stroke-width="1.3" /><path d="M-1.5 -9.5H1.5V-7H-1.5Z M-1.5 7H1.5V9.5H-1.5Z" fill="#f4f6f8"/><path d="M0 5Q-1 0 -6 0 M0 -5Q1 0 6 0" fill="none" stroke="#4fd34f" stroke-width="1.2" /><path d="M-5.5 -2.5L-9 0L-5.5 2.5Z M5.5 -2.5L9 0L5.5 2.5Z" fill="#4fd34f"/><path d="M16 3.5H20L18 7.5Z" fill="#f4f6f8"/></g><g transform="translate(1713.5 89.5)"><path d="M-7 0H7.5 M-2.5 -4.5L-7 0L-2.5 4.5" fill="none" stroke="#f4f6f8" stroke-width="1.2" /><path d="M16 3.5H20L18 7.5Z" fill="#f4f6f8"/></g><path d="M11 83h1.6M11 89h1.6M11 95h1.6" stroke="#46535f" stroke-width="1.6"/><g transform="translate(30.5 124.5)"><rect x="-7" y="-7" width="5.5" height="5.5" fill="none" stroke="#f4f6f8" stroke-width="1.2"/><path d="M-5.1 -5.1h1.7v1.7h-1.7Z" fill="#f4f6f8"/><rect x="-7" y="1.5" width="5.5" height="5.5" fill="none" stroke="#f4f6f8" stroke-width="1.2"/><path d="M-5.1 3.4h1.7v1.7h-1.7Z" fill="#f4f6f8"/><rect x="1.5" y="-7" width="5.5" height="5.5" fill="none" stroke="#f4f6f8" stroke-width="1.2"/><path d="M3.4 -5.1h1.7v1.7h-1.7Z" fill="#f4f6f8"/><rect x="1.5" y="1.5" width="5.5" height="5.5" fill="none" stroke="#f4f6f8" stroke-width="1.2"/><path d="M3.4 3.4h1.7v1.7h-1.7Z" fill="#f4f6f8"/></g><g transform="translate(63.5 124.5)"><path d="M-5 -8V6 M-7 4H8" fill="none" stroke="#f4f6f8" stroke-width="1.3" /><path d="M-3 0H0V2.5H-3Z" fill="#f4f6f8"/></g><g transform="translate(94.5 124.5)"><path d="M0 -7V7" fill="none" stroke="#f4f6f8" stroke-width="1.3" /><rect x="-2.2" y="-10" width="4.6" height="4" fill="none" stroke="#f4f6f8" stroke-width="1.2"/><rect x="-2.2" y="6" width="4.6" height="4" fill="none" stroke="#f4f6f8" stroke-width="1.2"/></g><path d="M113.5 109V139" stroke="#26323d" stroke-width="1"/><g transform="translate(129.5 124.5)"><path d="M-9 -6H7V0.5 M-9 -6V5H0 M-5.5 -6V5 M-9 -3.2H-5.5M-9 -0.4H-5.5M-9 2.4H-5.5 M-3.5 3V-3.5H5V0" fill="none" stroke="#f4f6f8" stroke-width="1.1" /><path d="M1.5 6L4.5 9L10.5 2" fill="none" stroke="#3aae4a" stroke-width="1.2" /><path d="M16 3.5H20L18 7.5Z" fill="#f4f6f8"/></g><g transform="translate(172.5 124.5)"><path d="M-7 -4.5H3.5V0 M-7 -4.5V4.5H0 M-2 -8.5V-4.5 M-2 4.5V8.5 M-4 -8.5H0 M-4 8.5H0" fill="none" stroke="#f4f6f8" stroke-width="1.2" /><path d="M0.5 6.5L3.5 9.5L9.5 2.5" fill="none" stroke="#3aae4a" stroke-width="1.2" /><path d="M15 3.5H19L17 7.5Z" fill="#f4f6f8"/></g><g transform="translate(214.5 124.5)"><path d="M-8 4L4 -8" fill="none" stroke="#f4f6f8" stroke-width="1.2" /><circle cx="-2" cy="-2" r="2.3" fill="#f4f6f8" stroke="#f4f6f8" stroke-width="1"/><path d="M0.5 6.5L3.5 9.5L9.5 2.5" fill="none" stroke="#3aae4a" stroke-width="1.2" /><path d="M15 3.5H19L17 7.5Z" fill="#f4f6f8"/></g><g transform="translate(257.5 124.5)"><path d="M-2.5 -10.5H2.5 M0 -10.5V-3 M-3.5 -1.5Q0 -4.5 3.5 -1.5 M0 4V8 M-2.5 8.5H2.5" fill="none" stroke="#f4f6f8" stroke-width="1.2" /><path d="M-2.8 -0.5H2.8V4.5H-2.8Z" fill="#f4f6f8"/><path d="M-0.5 7.5L2.5 10.5L8.5 3.5" fill="none" stroke="#3aae4a" stroke-width="1.2" /><path d="M14 3.5H18L16 7.5Z" fill="#f4f6f8"/></g><g transform="translate(298.5 124.5)"><path d="M-3.5 -7.5H3.5 M0 -7.5V-3.5 M0 1.5V5.5 M-3.5 5.5H3.5" fill="none" stroke="#f4f6f8" stroke-width="1.2" /><circle cx="0" cy="-1" r="2.5" fill="none" stroke="#f4f6f8" stroke-width="1.1"/><path d="M0.5 6.5L3.5 9.5L9.5 2.5" fill="none" stroke="#3aae4a" stroke-width="1.2" /><path d="M15 3.5H19L17 7.5Z" fill="#f4f6f8"/></g><g transform="translate(339.5 124.5)"><path d="M-8.5 4V-6.5H7.5V0 M-8.5 4H0 M-6 1.5V-4H5V-1" fill="none" stroke="#f4f6f8" stroke-width="1.2" /><path d="M1.5 6.5L4.5 9.5L10.5 2.5" fill="none" stroke="#3aae4a" stroke-width="1.2" /><path d="M16 3.5H20L18 7.5Z" fill="#f4f6f8"/></g><path d="M369.5 109V139" stroke="#26323d" stroke-width="1"/><g transform="translate(388.5 124.5)"><g transform="rotate(45)"><path d="M0 -12.5V-5.5" fill="none" stroke="#f4f6f8" stroke-width="2.8" /><rect x="-3" y="-5.5" width="6" height="2.2" fill="#f4f6f8" stroke="#f4f6f8" stroke-width="1"/><path d="M-5 -2.5H5V7H-5Z" fill="none" stroke="#f4f6f8" stroke-width="1.3" /><path d="M-5 2L-2 5L1 2L3 5L5 3V7H-5Z" fill="#f4f6f8"/></g></g><g transform="translate(420.5 124.5)"><g transform="rotate(45)"><path d="M0 -12.5V-5.5" fill="none" stroke="#707a84" stroke-width="2.8" /><rect x="-3" y="-5.5" width="6" height="2.2" fill="#707a84" stroke="#707a84" stroke-width="1"/><path d="M-5 -2.5H5V7H-5Z" fill="none" stroke="#7f6a70" stroke-width="1.3" /><path d="M-5 2L-2 5L1 2L3 5L5 3V7H-5Z" fill="#8c5a68"/></g></g><path d="M438.5 109V139" stroke="#26323d" stroke-width="1"/><g transform="translate(456.5 124.5)"><path d="M-4 1L6 -9" fill="none" stroke="#f4f6f8" stroke-width="3" /><path d="M-6 4L-5.2 0L-2 3.2Z" fill="#f4f6f8"/><path d="M-10.5 6.5H-5.5V8H-10.5Z" fill="#e02020"/><path d="M-5.5 6.5H0V8H-5.5Z" fill="#30c030"/><path d="M0 6.5H5V8H0Z" fill="#3030d0"/><path d="M-10 8H9V11H-10Z" fill="#000"/><path d="M15 3.5H19L17 7.5Z" fill="#f4f6f8"/></g><g transform="translate(497.5 124.5)"><path d="M-8 -4.5H8" fill="none" stroke="#f4f6f8" stroke-width="1.2" stroke-dasharray="2.6 1"/><path d="M-8 -1.5H8" fill="none" stroke="#f4f6f8" stroke-width="1.2" stroke-dasharray="1 1"/><path d="M-8 1.5H8" fill="none" stroke="#f4f6f8" stroke-width="1.2" stroke-dasharray="1.6 0.8"/><path d="M16 3.5H20L18 7.5Z" fill="#f4f6f8"/></g><g transform="translate(539.5 124.5)"><path d="M-8 -5H8" fill="none" stroke="#f4f6f8" stroke-width="1.2" /><path d="M-8 -1H8" fill="none" stroke="#f4f6f8" stroke-width="1.8" /><path d="M-8 3.5H8" fill="none" stroke="#f4f6f8" stroke-width="2.6" /><path d="M16 3.5H20L18 7.5Z" fill="#f4f6f8"/></g><g transform="translate(582.5 124.5)"><path d="M-7 -2L0 -9.5L7 -2.5L0 4.5Z" fill="none" stroke="#f4f6f8" stroke-width="1.3" /><path d="M-5.5 -0.5H5L0 4.5Z" fill="#f4f6f8"/><path d="M7 2Q9 5 7 6Q5 5 7 2Z" fill="#f4f6f8"/><path d="M-10 7.5H9.5V11H-10Z" fill="#0b0f14"/><path d="M15 3.5H19L17 7.5Z" fill="#f4f6f8"/></g><rect x="611" y="112" width="22" height="24" fill="#fff"/><g transform="translate(623.5 124.5)"><path d="M16 3.5H20L18 7.5Z" fill="#f4f6f8"/></g><path d="M653.5 109V139" stroke="#26323d" stroke-width="1"/><g transform="translate(671.5 124.5)"><path d="M0 -8L8 -4L0 0L-8 -4Z" fill="#4fd34f"/><path d="M-8 -0.5L0 3.5L8 -0.5 M-8 3L0 7L8 3" fill="none" stroke="#f4f6f8" stroke-width="1.2" /><path d="M6 6L10 10M10 6L6 10" fill="none" stroke="#d02040" stroke-width="1" /></g><rect x="688" y="112" width="74" height="24" fill="#2a3743"/><text x="693" y="128.5" font-size="12" fill="#6f7b86" textLength="45" lengthAdjust="spacingAndGlyphs">Standard</text><path d="M748 122L752.5 126.5L757 122" fill="none" stroke="#6f7b86" stroke-width="1.3" /><path d="M762.5 109V139" stroke="#26323d" stroke-width="1"/><path d="M769 118h1.6M769 124h1.6M769 130h1.6" stroke="#46535f" stroke-width="1.6"/><g transform="translate(789.5 124.5)"><path d="M-4 -8.5V5.5L-1 2.5L1.5 8L3.5 7L1 1.8H5.5Z" fill="#f4f6f8"/></g><text x="820" y="130" font-size="15" font-weight="bold" fill="#f4f6f8" text-anchor="middle">A</text><g transform="translate(820.5 124.5)"><path d="M16 3.5H20L18 7.5Z" fill="#f4f6f8"/></g><text x="862" y="130" font-size="15" font-weight="bold" fill="#f4f6f8" text-anchor="middle">A</text><text x="865.5" y="119.5" font-size="9.5" font-weight="bold" fill="#35d0c0">a</text><g transform="translate(862.5 124.5)"><path d="M16 3.5H20L18 7.5Z" fill="#f4f6f8"/></g><g transform="translate(906.5 124.5)"><rect x="-8" y="-5.5" width="16" height="12" fill="none" stroke="#f4f6f8" stroke-width="1.2"/><path d="M-2 -1.5H5.5 M-5.5 1H5.5 M-5.5 3.5H5.5" fill="none" stroke="#f4f6f8" stroke-width="1" /><text x="-6" y="-0.5" font-size="4.5" font-weight="bold" fill="#35d0c0">A</text></g><path d="M925.5 109V139" stroke="#26323d" stroke-width="1"/><g transform="translate(943.5 124.5)"><path d="M-7 -6L6.5 7" fill="none" stroke="#f4f6f8" stroke-width="1.2" /></g><g transform="translate(973.5 124.5)"><rect x="-9" y="-6.5" width="18.5" height="12" fill="none" stroke="#f4f6f8" stroke-width="1.2"/><path d="M16 3.5H20L18 7.5Z" fill="#f4f6f8"/></g><g transform="translate(1014.5 124.5)"><circle cx="0" cy="-0.5" r="7" fill="none" stroke="#f4f6f8" stroke-width="1.2"/><path d="M17 3.5H21L19 7.5Z" fill="#f4f6f8"/></g><g transform="translate(1057.5 124.5)"><path d="M-3 -8Q8 -6 4 3Q2 6.5 -3 7" fill="none" stroke="#f4f6f8" stroke-width="1.2" /><path d="M16 3.5H20L18 7.5Z" fill="#f4f6f8"/></g><g transform="translate(1101.5 124.5)"><path d="M-3.5 -6.5Q3 -5 3.5 1" fill="none" stroke="#f4f6f8" stroke-width="1.2" /><path d="M14 3.5H18L16 7.5Z" fill="#f4f6f8"/></g><g transform="translate(1143.5 124.5)"><path d="M-6.5 -8.5Q5 -7 6.5 5" fill="none" stroke="#f4f6f8" stroke-width="1.2" /><path d="M14 3.5H18L16 7.5Z" fill="#f4f6f8"/></g><g transform="translate(1185.5 124.5)"><path d="M-7 6Q-4 -2 0 2Q4 6 7.5 -6" fill="none" stroke="#f4f6f8" stroke-width="1.2" /><rect x="-10" y="-8.5" width="4" height="4" fill="none" stroke="#f4f6f8" stroke-width="1.1"/><rect x="5.5" y="-8.5" width="4" height="4" fill="none" stroke="#f4f6f8" stroke-width="1.1"/><rect x="-10" y="6" width="4" height="4" fill="none" stroke="#f4f6f8" stroke-width="1.1"/><rect x="5.5" y="6" width="4" height="4" fill="none" stroke="#f4f6f8" stroke-width="1.1"/></g><g transform="translate(1215.5 124.5)"><ellipse cx="0" cy="0" rx="10" ry="6" fill="none" stroke="#f4f6f8" stroke-width="1.2"/><path d="M-10 0H10 M0 -6V6" fill="none" stroke="#d0d4d8" stroke-width="1.2" /><path d="M16 3.5H20L18 7.5Z" fill="#f4f6f8"/></g><g transform="translate(1257.5 124.5)"><path d="M-8.5 0L-4 -7H4.5L9 0L4.5 7H-4Z" fill="none" stroke="#f4f6f8" stroke-width="1.2" /><path d="M16 3.5H20L18 7.5Z" fill="#f4f6f8"/></g><path d="M1287.5 109V139" stroke="#26323d" stroke-width="1"/><g transform="translate(1305.5 124.5)"><rect x="-7" y="-7" width="14.5" height="14" fill="none" stroke="#f4f6f8" stroke-width="1.2"/><path d="M-5 7L0 -0.5L3 4 M1 5L3.5 1.5L6.5 7" fill="none" stroke="#f4f6f8" stroke-width="1" /><circle cx="4" cy="-3.5" r="0.9" fill="#f4f6f8" stroke="#f4f6f8" stroke-width="0.8"/></g><g transform="translate(1337.5 124.5)"><g transform="translate(0 -2)"><rect x="-7" y="-7" width="14.5" height="14" fill="none" stroke="#f4f6f8" stroke-width="1.2"/><path d="M-5 7L0 -0.5L3 4 M1 5L3.5 1.5L6.5 7" fill="none" stroke="#f4f6f8" stroke-width="1" /><circle cx="4" cy="-3.5" r="0.9" fill="#f4f6f8" stroke="#f4f6f8" stroke-width="0.8"/></g><path d="M-2.5 8H0.5V10.5H-2.5Z M3 8H6V10.5H3Z M0.5 9.3H3" fill="none" stroke="#f4f6f8" stroke-width="1" /></g><g transform="translate(1370.5 124.5)"><path d="M-6 6Q-10 5 -9 1.5Q-10.5 -2 -7 -3Q-6.5 -7 -2.5 -5.5Q0 -8 3 -5.5Q7 -7 7.5 -3Q10.5 -2 9 1.5Q10.5 5 6 6Q3 8.5 0 6.5Q-3 8.5 -6 6Z" fill="none" stroke="#f4f6f8" stroke-width="1.2" /></g><path d="M1389.5 109V139" stroke="#26323d" stroke-width="1"/><g transform="translate(1406.5 124.5)"><path d="M-8.5 -6V5 M8.5 -6V5 M-8.5 2.5H8.5" fill="none" stroke="#f4f6f8" stroke-width="1.2" /><path d="M-6 -3H6" fill="none" stroke="#f4f6f8" stroke-width="1" /><path d="M-6.5 -3L-4.5 -4.2V-1.8Z M6.5 -3L4.5 -4.2V-1.8Z" fill="#f4f6f8"/></g><g transform="translate(1439.5 124.5)"><path d="M-8.5 -6V5 M8.5 -6V5 M-8.5 2.5H8.5" fill="none" stroke="#f4f6f8" stroke-width="1.2" /><path d="M-8.5 -2.5H8.5 M-5 -5V0 M-1.8 -5V0 M1.8 -5V0 M5 -5V0" fill="none" stroke="#f4f6f8" stroke-width="1" /></g><g transform="translate(1470.5 124.5)"><path d="M-5 -4.5H5V3" fill="none" stroke="#f4f6f8" stroke-width="1.2" /><path d="M-7 -6.5H-3.5V-3H-7Z M3.5 -6H6.5V-3H3.5Z M3.2 2H6.8V5.5H3.2Z" fill="#f4f6f8"/></g><path d="M11 118h1.6M11 124h1.6M11 130h1.6" stroke="#46535f" stroke-width="1.6"/></svg><svg class="b" style="left:0;top:0" width="110" height="40" viewBox="0 0 110 40"><path d="M2.8 14.7H12.8 M2.8 19.3H12.8 M2.8 23.9H12.8 M14.8 14V23.9H25 M26.2 14.7H35.6 M26.2 19.3H35.6 M26.2 23.9H35.6 M48 14.7H41Q38.3 14.7 38.3 17.2V21.4Q38.3 23.9 41 23.9H48 M48.7 14.7H58.6 M53.7 14.7V24.7 M61.1 24.7V14.7H70Q72.3 14.7 72.3 17Q72.3 19.3 70 19.3H61.1 M67.5 19.3L72.8 24.7 M76.2 14V24.7 " fill="none" stroke="#f7c51c" stroke-width="1.85"/><path d="M97.5 7.2H103L80.6 33H74Z" fill="#f7c51c"/><path d="M81 14H87.5L97 24.7H90Z" fill="#f7c51c"/><text x="89.5" y="32.8" font-size="5" fill="#7d7330" font-style="italic" font-weight="bold" textLength="8">AI</text></svg>
<div class="b" style="left:0px;top:143px;width:3px;height:908px;background:#16222e;"></div>
<div class="b" style="left:3px;top:143px;width:29px;height:908px;background:#17232f;"></div>
<div class="b" style="left:3px;top:143px;width:27px;height:106px;background:#1c2a38;"></div>
<div class="b" style="left:3px;top:251px;width:27px;height:105px;background:#1c2a38;"></div>
<svg class="b" style="left:9px;top:149px" width="14" height="14" viewBox="0 0 14 14"><path d="M1 1.5H13V9.5H4.5" fill="none" stroke="#e8ebee" stroke-width="1.3"/><path d="M3.8 3.5V7.5M6.2 3.5V7.5M8.6 3.5V7.5" stroke="#e8ebee" stroke-width="1.2"/><circle cx="2.3" cy="10.8" r="1.6" fill="none" stroke="#b9c0c7" stroke-width="0.9"/></svg>
<svg class="b" style="left:9px;top:259px" width="14" height="14" viewBox="0 0 14 14"><path d="M1 1.5H13V9.5H4.5" fill="none" stroke="#e8ebee" stroke-width="1.3"/><path d="M3.8 3.5V7.5M6.2 3.5V7.5M8.6 3.5V7.5" stroke="#e8ebee" stroke-width="1.2"/><circle cx="2.3" cy="10.8" r="1.6" fill="none" stroke="#b9c0c7" stroke-width="0.9"/></svg>
<div class="t" style="left:25px;top:166px;font-size:12.5px;line-height:17px;color:#fff;letter-spacing:-0.695px;transform:rotate(90deg);transform-origin:0 0;">Projekt-Explorer</div>
<div class="t" style="left:25px;top:275.5px;font-size:12.5px;line-height:17px;color:#fff;letter-spacing:-0.748px;transform:rotate(90deg);transform-origin:0 0;">Eigenschaften</div>
<div class="b" style="left:32px;top:143px;width:402px;height:908px;background:#2f3b47;"></div>
<div class="b" style="left:32px;top:143px;width:402px;height:29px;background:#3a4651;"></div>
<div class="t" style="left:42px;top:148.5px;font-size:12.5px;line-height:17px;color:#f4f6f8;letter-spacing:-0.239px;">Prüfliste</div>
<svg class="b" style="left:360px;top:149px" width="70" height="16" viewBox="0 0 70 16"><path d="M3 5.5L8 10.5L13 5.5" fill="none" stroke="#fff" stroke-width="1.6"/><path d="M31 2.5H37M32 2.5V8.5M36.4 2.5V8.5M29 8.8H39M34 9V14" fill="none" stroke="#fff" stroke-width="1.3"/><path d="M55.5 3L65 12.5M65 3L55.5 12.5" fill="none" stroke="#fff" stroke-width="2"/></svg>
<svg class="b" style="left:40px;top:178px" width="60" height="26" viewBox="0 0 60 26"><path d="M18.5 8.2A7.2 7.2 0 1 0 20.7 13" fill="none" stroke="#f0f2f4" stroke-width="1.3"/><path d="M15.2 5.6L22 5L20.2 11.2Z" fill="#f0f2f4"/><path d="M38.5 8.5H48.5L47.5 20.5H39.5Z M37.5 8.5H49.5 M41.5 8.3C41.5 5.5 45.5 5.5 45.5 8.3 M41.4 10.5V18.5M43.5 10.5V18.5M45.6 10.5V18.5" fill="none" stroke="#b8bfc6" stroke-width="1.1"/></svg>
<div class="b" style="left:101px;top:179px;width:1px;height:25px;background:#cfd4d9;"></div>
<div class="t" style="left:111px;top:184px;font-size:12.5px;line-height:16px;color:#fff;letter-spacing:-0.464px;">Filter:</div>
<div class="b" style="left:146px;top:182px;width:171px;height:20px;background:#1c2936;border-radius:2px;"></div>
<div class="b" style="left:153px;top:184px;width:16px;height:16px;background:#37434e;"></div>
<div class="t" style="left:155px;top:187px;font-size:7px;line-height:10px;color:#fff;font-weight:bold;letter-spacing:-0.536px;">ALL</div>
<div class="t" style="left:179px;top:184px;font-size:12.5px;line-height:16px;color:#fff;letter-spacing:-1.004px;">Alle anzeigen</div>
<svg class="b" style="left:302px;top:189px" width="10" height="6"><path d="M1 1H8.5L4.75 5Z" fill="#fff"/></svg>
<div class="b" style="left:36px;top:209px;width:394px;height:839px;background:#e6eaf1;"></div>
<svg class="b" style="left:0;top:0" width="440" height="1052" viewBox="0 0 440 1052"><rect x="36" y="209" width="312" height="485" fill="#e4e8ef"/><rect x="109" y="320.9" width="238.5" height="20.8" fill="#c4cbd5"/><path d="M36 231.3H348" stroke="#f7f9fb" stroke-width="1.2"/><path d="M36 253.3H348" stroke="#f7f9fb" stroke-width="1.2"/><path d="M36 275.3H348" stroke="#f7f9fb" stroke-width="1.2"/><path d="M36 297.3H348" stroke="#f7f9fb" stroke-width="1.2"/><path d="M36 319.3H348" stroke="#f7f9fb" stroke-width="1.2"/><path d="M36 341.3H348" stroke="#f7f9fb" stroke-width="1.2"/><path d="M36 363.3H348" stroke="#f7f9fb" stroke-width="1.2"/><path d="M36 385.3H348" stroke="#f7f9fb" stroke-width="1.2"/><path d="M36 407.3H348" stroke="#f7f9fb" stroke-width="1.2"/><path d="M36 429.3H348" stroke="#f7f9fb" stroke-width="1.2"/><path d="M36 451.3H348" stroke="#f7f9fb" stroke-width="1.2"/><path d="M36 473.3H348" stroke="#f7f9fb" stroke-width="1.2"/><path d="M36 495.3H348" stroke="#f7f9fb" stroke-width="1.2"/><path d="M36 517.3H348" stroke="#f7f9fb" stroke-width="1.2"/><path d="M36 539.3H348" stroke="#f7f9fb" stroke-width="1.2"/><path d="M36 561.3H348" stroke="#f7f9fb" stroke-width="1.2"/><path d="M36 583.3H348" stroke="#f7f9fb" stroke-width="1.2"/><path d="M36 605.3H348" stroke="#f7f9fb" stroke-width="1.2"/><path d="M36 627.3H348" stroke="#f7f9fb" stroke-width="1.2"/><path d="M36 649.3H348" stroke="#f7f9fb" stroke-width="1.2"/><path d="M36 671.3H348" stroke="#f7f9fb" stroke-width="1.2"/><path d="M36 693.3H348" stroke="#f7f9fb" stroke-width="1.2"/><path d="M76.5 209V694" stroke="#f7f9fb" stroke-width="1.2"/><path d="M108.5 209V694" stroke="#f7f9fb" stroke-width="1.2"/><path d="M347.5 209V694" stroke="#f7f9fb" stroke-width="1.2"/><path d="M115.5 226V243" stroke="#8a929b" stroke-width="1" stroke-dasharray="1 1.4"/><path d="M115.5 243.5H122" stroke="#8a929b" stroke-width="1" stroke-dasharray="1 1.4"/><path d="M109.5 232V254" stroke="#8a929b" stroke-width="1" stroke-dasharray="1 1.4"/><path d="M115.5 314V375" stroke="#8a929b" stroke-width="1" stroke-dasharray="1 1.4"/><path d="M115.5 331.5H122" stroke="#8a929b" stroke-width="1" stroke-dasharray="1 1.4"/><path d="M115.5 353.5H122" stroke="#8a929b" stroke-width="1" stroke-dasharray="1 1.4"/><path d="M115.5 375.5H122" stroke="#8a929b" stroke-width="1" stroke-dasharray="1 1.4"/><path d="M109.5 320V386" stroke="#8a929b" stroke-width="1" stroke-dasharray="1 1.4"/><path d="M115.5 446V573" stroke="#8a929b" stroke-width="1" stroke-dasharray="1 1.4"/><path d="M115.5 463.5H122" stroke="#8a929b" stroke-width="1" stroke-dasharray="1 1.4"/><path d="M115.5 485.5H122" stroke="#8a929b" stroke-width="1" stroke-dasharray="1 1.4"/><path d="M115.5 507.5H122" stroke="#8a929b" stroke-width="1" stroke-dasharray="1 1.4"/><path d="M115.5 529.5H122" stroke="#8a929b" stroke-width="1" stroke-dasharray="1 1.4"/><path d="M115.5 551.5H122" stroke="#8a929b" stroke-width="1" stroke-dasharray="1 1.4"/><path d="M115.5 573.5H122" stroke="#8a929b" stroke-width="1" stroke-dasharray="1 1.4"/><path d="M109.5 452V584" stroke="#8a929b" stroke-width="1" stroke-dasharray="1 1.4"/><g transform="translate(92.5 221.5)"><path d="M-5 -5H5V5H-5Z M0 -8V-5 M0 5V8 M-2 -8H2 M-2 8H2" fill="none" stroke="#1b2a3a" stroke-width="1.1"/></g><rect x="111.5" y="216.5" width="8" height="8" fill="#f4f6f9" stroke="#8b95a1" stroke-width="1"/><path d="M113.5 220.5H117.5" stroke="#26303c" stroke-width="1"/><g transform="translate(92.5 265.5)"><path d="M-5 -5H5V5H-5Z M0 -8V-5 M0 5V8 M-2 -8H2 M-2 8H2" fill="none" stroke="#1b2a3a" stroke-width="1.1"/></g><rect x="111.5" y="260.5" width="8" height="8" fill="#f4f6f9" stroke="#8b95a1" stroke-width="1"/><path d="M113.5 264.5H117.5" stroke="#26303c" stroke-width="1"/><path d="M115.5 262.5V266.5" stroke="#26303c" stroke-width="1"/><g transform="translate(92.5 287.5)"><path d="M-8 -6H8V4H-8Z M-5 -6V4 M-8 -3H-5 M-8 0H-5 M-3 -4H6V2H-3Z" fill="none" stroke="#1b2a3a" stroke-width="1.1"/></g><rect x="111.5" y="282.5" width="8" height="8" fill="#f4f6f9" stroke="#8b95a1" stroke-width="1"/><path d="M113.5 286.5H117.5" stroke="#26303c" stroke-width="1"/><path d="M115.5 284.5V288.5" stroke="#26303c" stroke-width="1"/><g transform="translate(92.5 309.5)"><path d="M-8 -6H8V4H-8Z M-5 -6V4 M-8 -3H-5 M-8 0H-5 M-3 -4H6V2H-3Z" fill="none" stroke="#1b2a3a" stroke-width="1.1"/></g><rect x="111.5" y="304.5" width="8" height="8" fill="#f4f6f9" stroke="#8b95a1" stroke-width="1"/><path d="M113.5 308.5H117.5" stroke="#26303c" stroke-width="1"/><path d="M52.5 326.5L57.5 331L52.5 335.5Z" fill="#1b2a3a"/><g transform="translate(92.5 397.5)"><path d="M-9 0H8 M3 -4L8 0L3 4" fill="none" stroke="#d0304a" stroke-width="1.1"/></g><rect x="111.5" y="392.5" width="8" height="8" fill="#f4f6f9" stroke="#8b95a1" stroke-width="1"/><path d="M113.5 396.5H117.5" stroke="#26303c" stroke-width="1"/><path d="M115.5 394.5V398.5" stroke="#26303c" stroke-width="1"/><g transform="translate(92.5 419.5)"><path d="M-8 3H4V-3" fill="none" stroke="#1b2a3a" stroke-width="1" stroke-dasharray="1.5 1.5"/><circle cx="6" cy="-4" r="1.5" fill="#1b2a3a"/><circle cx="-8" cy="5.5" r="1.2" fill="#1b2a3a"/><circle cx="-3" cy="5.5" r="1.2" fill="#1b2a3a"/></g><rect x="111.5" y="414.5" width="8" height="8" fill="#f4f6f9" stroke="#8b95a1" stroke-width="1"/><path d="M113.5 418.5H117.5" stroke="#26303c" stroke-width="1"/><path d="M115.5 416.5V420.5" stroke="#26303c" stroke-width="1"/><g transform="translate(92.5 441.5)"><path d="M-7 0H7" stroke="#1b2a3a" stroke-width="1"/><path d="M-10 -1.5L-7.5 1.5M-7.5 -1.5L-10 1.5M7.5 -1.5L10 1.5M10 -1.5L7.5 1.5" stroke="#e0306a" stroke-width="1"/></g><rect x="111.5" y="436.5" width="8" height="8" fill="#f4f6f9" stroke="#8b95a1" stroke-width="1"/><path d="M113.5 440.5H117.5" stroke="#26303c" stroke-width="1"/><g transform="translate(92.5 595.5)"><path d="M-9 -5H8V4H-9Z" fill="none" stroke="#1b2a3a" stroke-width="1.1"/></g><rect x="111.5" y="590.5" width="8" height="8" fill="#f4f6f9" stroke="#8b95a1" stroke-width="1"/><path d="M113.5 594.5H117.5" stroke="#26303c" stroke-width="1"/><path d="M115.5 592.5V596.5" stroke="#26303c" stroke-width="1"/><g transform="translate(92.5 617.5)"><path d="M-6 -5H3V-1.5H-6Z M-3 -1.5H6V2H-3Z M0 2H7V5H0Z" fill="none" stroke="#3a4856" stroke-width="1"/></g><rect x="111.5" y="612.5" width="8" height="8" fill="#f4f6f9" stroke="#8b95a1" stroke-width="1"/><path d="M113.5 616.5H117.5" stroke="#26303c" stroke-width="1"/><path d="M115.5 614.5V618.5" stroke="#26303c" stroke-width="1"/><g transform="translate(92.5 639.5)"><path d="M0 -7V7" stroke="#1b2a3a" stroke-width="1.1"/><circle cx="0" cy="0" r="2.2" fill="#1b2a3a"/><circle cx="0" cy="-7" r="0.9" fill="#1b2a3a"/><circle cx="0" cy="7" r="0.9" fill="#1b2a3a"/></g><rect x="111.5" y="634.5" width="8" height="8" fill="#f4f6f9" stroke="#8b95a1" stroke-width="1"/><path d="M113.5 638.5H117.5" stroke="#26303c" stroke-width="1"/><path d="M115.5 636.5V640.5" stroke="#26303c" stroke-width="1"/><g transform="translate(92.5 661.5)"><path d="M-3.5 -6.5H2.5L6 -3V4H-3.5Z M-3.5 -4H-6V6.5H3.5V4 M-1.5 -2H4M-1.5 0H4M-1.5 2H4" fill="none" stroke="#1b2a3a" stroke-width="1.1"/></g><rect x="111.5" y="656.5" width="8" height="8" fill="#f4f6f9" stroke="#8b95a1" stroke-width="1"/><path d="M113.5 660.5H117.5" stroke="#26303c" stroke-width="1"/><path d="M115.5 658.5V662.5" stroke="#26303c" stroke-width="1"/><g transform="translate(92.5 683.5)"><path d="M-6 -5H3V-1.5H-6Z M-3 -1.5H6V2H-3Z M0 2H7V5H0Z" fill="none" stroke="#3a4856" stroke-width="1"/></g><rect x="111.5" y="678.5" width="8" height="8" fill="#f4f6f9" stroke="#8b95a1" stroke-width="1"/><path d="M113.5 682.5H117.5" stroke="#26303c" stroke-width="1"/><path d="M115.5 680.5V684.5" stroke="#26303c" stroke-width="1"/></svg>
<div class="t" style="left:124px;top:213px;font-size:12px;line-height:16px;color:#1b2a3a;letter-spacing:-0.632px;">Prüfung auf Vorhandensein von Spulen ohn...</div>
<div class="t" style="left:124px;top:235px;font-size:12px;line-height:16px;color:#1b2a3a;letter-spacing:-0.639px;">Spule ohne Kontakte : =A1+ST-F4</div>
<div class="t" style="left:124px;top:257px;font-size:12px;line-height:16px;color:#1b2a3a;letter-spacing:-0.641px;">Prüfung auf Vorhandensein von Spulen mit f...</div>
<div class="t" style="left:124px;top:279px;font-size:12px;line-height:16px;color:#1b2a3a;letter-spacing:-0.596px;">Prüfung auf Vorhandensein von virtuellen S...</div>
<div class="t" style="left:124px;top:301px;font-size:12px;line-height:16px;color:#1b2a3a;letter-spacing:-0.631px;">Prüfung auf Vorhandensein von SPS-Haupt...</div>
<div class="t" style="left:124px;top:323px;font-size:12px;line-height:16px;color:#1b2a3a;letter-spacing:-0.660px;">"SPS-Hauptelement =A1+ST-K_DI ohne zu...</div>
<div class="t" style="left:124px;top:345px;font-size:12px;line-height:16px;color:#1b2a3a;letter-spacing:-0.685px;">"SPS-Hauptelement =A1+ST-K_DO ohne zu...</div>
<div class="t" style="left:124px;top:367px;font-size:12px;line-height:16px;color:#1b2a3a;letter-spacing:-0.669px;">"SPS-Hauptelement =A1+ST-13K2 ohne zu...</div>
<div class="t" style="left:124px;top:389px;font-size:12px;line-height:16px;color:#1b2a3a;letter-spacing:-0.542px;">Prüfung auf offene Potentiale/Leitungsverbi...</div>
<div class="t" style="left:124px;top:411px;font-size:12px;line-height:16px;color:#1b2a3a;letter-spacing:-0.582px;">Prüfung auf nicht geroutete Verbindungen i...</div>
<div class="t" style="left:124px;top:433px;font-size:12px;line-height:16px;color:#1b2a3a;letter-spacing:-0.633px;">Prüfung auf Konflikte der Potentiale</div>
<div class="t" style="left:124px;top:455px;font-size:12px;line-height:16px;color:#1b2a3a;letter-spacing:-0.619px;">Potential L kollidiert</div>
<div class="t" style="left:124px;top:477px;font-size:12px;line-height:16px;color:#1b2a3a;letter-spacing:-0.630px;">Potential L1,5 kollidiert</div>
<div class="t" style="left:124px;top:499px;font-size:12px;line-height:16px;color:#1b2a3a;letter-spacing:-0.642px;">Potential L16 kollidiert</div>
<div class="t" style="left:124px;top:521px;font-size:12px;line-height:16px;color:#1b2a3a;letter-spacing:-0.683px;">Potential FS kollidiert</div>
<div class="t" style="left:124px;top:543px;font-size:12px;line-height:16px;color:#1b2a3a;letter-spacing:-0.656px;">Potential L+1 kollidiert</div>
<div class="t" style="left:124px;top:565px;font-size:12px;line-height:16px;color:#1b2a3a;letter-spacing:-0.645px;">Potential L+0,75 kollidiert</div>
<div class="t" style="left:124px;top:587px;font-size:12px;line-height:16px;color:#1b2a3a;letter-spacing:-0.733px;">Prüfung auf fehlendes BMK in Symbolen</div>
<div class="t" style="left:124px;top:609px;font-size:12px;line-height:16px;color:#1b2a3a;letter-spacing:-0.670px;">Prüfung auf Symbole ohne hinterlegte Artikel</div>
<div class="t" style="left:124px;top:631px;font-size:12px;line-height:16px;color:#1b2a3a;letter-spacing:-0.619px;">Prüfung Drahtattribute und deren Verbindun...</div>
<div class="t" style="left:124px;top:653px;font-size:12px;line-height:16px;color:#1b2a3a;letter-spacing:-0.626px;">Existenz der Vorlagen für jeden verwendete...</div>
<div class="t" style="left:124px;top:675px;font-size:12px;line-height:16px;color:#1b2a3a;letter-spacing:-0.609px;">Vorhandensein Artikeldatenbank + BA-Date...</div>
<div class="b" style="left:442px;top:143px;width:1130px;height:908px;background:#303c48;"></div>
<div class="b" style="left:442px;top:143px;width:1130px;height:36px;background:#2e3b47;"></div>
<div class="b" style="left:444px;top:143.5px;width:221px;height:35px;background:#1c2a38;"></div>
<div class="b" style="left:452px;top:152px;width:15px;height:18px;background:#f7981d;"></div>
<svg class="b" style="left:452px;top:152px" width="15" height="18" viewBox="0 0 15 18"><path d="M9.5 3L5 9H10L5.5 15" fill="none" stroke="#5b3a1c" stroke-width="1.2"/></svg>
<div class="t" style="left:474.5px;top:153px;font-size:12px;line-height:17px;color:#fff;font-weight:bold;letter-spacing:-0.228px;">=A1+ST_Plan.0002.wsELD*</div>
<svg class="b" style="left:643px;top:154px" width="12" height="12" viewBox="0 0 12 12"><path d="M1.5 1.5L10.5 10.5M10.5 1.5L1.5 10.5" stroke="#fff" stroke-width="2"/></svg>
<svg class="b" style="left:1524px;top:151px" width="44" height="14" viewBox="0 0 44 14"><path d="M1.5 1.5H10" stroke="#fff" stroke-width="1.2"/><path d="M1.5 4H10L5.75 9.5Z" fill="#fff"/><path d="M29 1.5L38 10.5M38 1.5L29 10.5" stroke="#fff" stroke-width="2"/></svg>
<div class="b" style="left:447px;top:183px;width:1118px;height:17px;background:#182532;"></div>
<svg class="b" style="left:0;top:0" width="1920" height="210" viewBox="0 0 1920 210"><path d="M460.5 190V200" stroke="#e8ebee" stroke-width="1"/><path d="M596.5 190V200" stroke="#e8ebee" stroke-width="1"/><path d="M733.5 190V200" stroke="#e8ebee" stroke-width="1"/><path d="M869.5 190V200" stroke="#e8ebee" stroke-width="1"/><path d="M1006.5 190V200" stroke="#e8ebee" stroke-width="1"/><path d="M1142.5 190V200" stroke="#e8ebee" stroke-width="1"/><path d="M1278.5 190V200" stroke="#e8ebee" stroke-width="1"/><path d="M1414.5 190V200" stroke="#e8ebee" stroke-width="1"/><path d="M1551.5 190V200" stroke="#e8ebee" stroke-width="1"/><text x="528.5" y="196" font-size="10.5" fill="#fff" text-anchor="middle" stroke="#fff" stroke-width="0.35">1</text><text x="665.0" y="196" font-size="10.5" fill="#fff" text-anchor="middle" stroke="#fff" stroke-width="0.35">2</text><text x="801.5" y="196" font-size="10.5" fill="#fff" text-anchor="middle" stroke="#fff" stroke-width="0.35">3</text><text x="938.0" y="196" font-size="10.5" fill="#fff" text-anchor="middle" stroke="#fff" stroke-width="0.35">4</text><text x="1074.5" y="196" font-size="10.5" fill="#fff" text-anchor="middle" stroke="#fff" stroke-width="0.35">5</text><text x="1210.5" y="196" font-size="10.5" fill="#fff" text-anchor="middle" stroke="#fff" stroke-width="0.35">6</text><text x="1346.5" y="196" font-size="10.5" fill="#fff" text-anchor="middle" stroke="#fff" stroke-width="0.35">7</text><text x="1483.0" y="196" font-size="10.5" fill="#fff" text-anchor="middle" stroke="#fff" stroke-width="0.35">8</text></svg>
<div class="b" style="left:447px;top:200px;width:1118px;height:845px;background:#fff;"></div>
<div class="b" style="left:1565px;top:183px;width:7px;height:868px;background:#2b3844;"></div>
<div class="b" style="left:442px;top:1045px;width:1130px;height:6px;background:#2e3b47;"></div>
<svg class="b" style="left:0;top:0" width="1580" height="1060" viewBox="0 0 1580 1060" shape-rendering="geometricPrecision"><path d="M451 274.5H1563" stroke="#b9b9b9" stroke-width="0.8" stroke-dasharray="0.8 2.2"/><path d="M451 283.7H1563" stroke="#b9b9b9" stroke-width="0.8" stroke-dasharray="0.8 2.2"/><path d="M451 293.4H1563" stroke="#b9b9b9" stroke-width="0.8" stroke-dasharray="0.8 2.2"/><path d="M451 302.5H1563" stroke="#b9b9b9" stroke-width="0.8" stroke-dasharray="0.8 2.2"/><path d="M451 311.7H1563" stroke="#b9b9b9" stroke-width="0.8" stroke-dasharray="0.8 2.2"/><path d="M451 321H1563" stroke="#b9b9b9" stroke-width="0.8" stroke-dasharray="0.8 2.2"/><path d="M451 330.7H1563" stroke="#b9b9b9" stroke-width="0.8" stroke-dasharray="0.8 2.2"/><path d="M451 396.7H1563" stroke="#b9b9b9" stroke-width="0.8" stroke-dasharray="0.8 2.2"/><path d="M451 453.5H1563" stroke="#b9b9b9" stroke-width="0.8" stroke-dasharray="0.8 2.2"/><path d="M451 518.5H1563" stroke="#b9b9b9" stroke-width="0.8" stroke-dasharray="0.8 2.2"/><path d="M451 575.4H1563" stroke="#b9b9b9" stroke-width="0.8" stroke-dasharray="0.8 2.2"/><path d="M451 641.4H1563" stroke="#b9b9b9" stroke-width="0.8" stroke-dasharray="0.8 2.2"/><path d="M451 697.6H1563" stroke="#b9b9b9" stroke-width="0.8" stroke-dasharray="0.8 2.2"/><path d="M451 763.7H1563" stroke="#b9b9b9" stroke-width="0.8" stroke-dasharray="0.8 2.2"/><path d="M451 820.4H1563" stroke="#b9b9b9" stroke-width="0.8" stroke-dasharray="0.8 2.2"/><path d="M451 867.4H1563" stroke="#b9b9b9" stroke-width="0.8" stroke-dasharray="0.8 2.2"/><path d="M460.5 236.5H1551.5V1008.5H460.5Z M460.5 255.5H1551.5" stroke="#1a1a1a" stroke-width="1" fill="none"/><path d="M596.5 236.5V255.5" stroke="#1a1a1a" stroke-width="1" fill="none"/><path d="M733.5 236.5V255.5" stroke="#1a1a1a" stroke-width="1" fill="none"/><path d="M869.5 236.5V255.5" stroke="#1a1a1a" stroke-width="1" fill="none"/><path d="M1006.5 236.5V255.5" stroke="#1a1a1a" stroke-width="1" fill="none"/><path d="M1142.5 236.5V255.5" stroke="#1a1a1a" stroke-width="1" fill="none"/><path d="M1278.5 236.5V255.5" stroke="#1a1a1a" stroke-width="1" fill="none"/><path d="M1414.5 236.5V255.5" stroke="#1a1a1a" stroke-width="1" fill="none"/><path d="M1006.5 227V236.5" stroke="#1a1a1a" stroke-width="1" fill="none"/><text class="s" x="528.5" y="248.5" font-size="7.6" fill="#555" text-anchor="middle">1</text><text class="s" x="665.0" y="248.5" font-size="7.6" fill="#555" text-anchor="middle">2</text><text class="s" x="801.5" y="248.5" font-size="7.6" fill="#555" text-anchor="middle">3</text><text class="s" x="938.0" y="248.5" font-size="7.6" fill="#555" text-anchor="middle">4</text><text class="s" x="1074.5" y="248.5" font-size="7.6" fill="#555" text-anchor="middle">5</text><text class="s" x="1210.5" y="248.5" font-size="7.6" fill="#555" text-anchor="middle">6</text><text class="s" x="1346.5" y="248.5" font-size="7.6" fill="#555" text-anchor="middle">7</text><text class="s" x="1483.0" y="248.5" font-size="7.6" fill="#555" text-anchor="middle">8</text><text class="m" x="571" y="277.3" font-size="7.3" fill="#6d6d6d" text-anchor="start" textLength="17.5" lengthAdjust="spacingAndGlyphs">/1.8</text><text class="m" x="597.5" y="272.3" font-size="7.3" fill="#222" text-anchor="start" textLength="8.8" lengthAdjust="spacingAndGlyphs">L1</text><path d="M593.5 273.0L596 274.5L593.5 276.0" stroke="#1a1a1a" stroke-width="0.8" fill="none"/><text class="m" x="571" y="296.3" font-size="7.3" fill="#6d6d6d" text-anchor="start" textLength="17.5" lengthAdjust="spacingAndGlyphs">/1.8</text><text class="m" x="597.5" y="291.3" font-size="7.3" fill="#222" text-anchor="start" textLength="8.8" lengthAdjust="spacingAndGlyphs">L2</text><path d="M593.5 292.0L596 293.5L593.5 295.0" stroke="#1a1a1a" stroke-width="0.8" fill="none"/><text class="m" x="571" y="314.3" font-size="7.3" fill="#6d6d6d" text-anchor="start" textLength="17.5" lengthAdjust="spacingAndGlyphs">/1.8</text><text class="m" x="597.5" y="309.3" font-size="7.3" fill="#222" text-anchor="start" textLength="8.8" lengthAdjust="spacingAndGlyphs">L3</text><path d="M593.5 310.0L596 311.5L593.5 313.0" stroke="#1a1a1a" stroke-width="0.8" fill="none"/><text class="m" x="571" y="333.3" font-size="7.3" fill="#6d6d6d" text-anchor="start" textLength="17.5" lengthAdjust="spacingAndGlyphs">/1.2</text><text class="m" x="597.5" y="328.3" font-size="7.3" fill="#222" text-anchor="start" textLength="17.6" lengthAdjust="spacingAndGlyphs">L1.1</text><path d="M593.5 329.0L596 330.5L593.5 332.0" stroke="#1a1a1a" stroke-width="0.8" fill="none"/><text class="m" x="571" y="352.3" font-size="7.3" fill="#6d6d6d" text-anchor="start" textLength="17.5" lengthAdjust="spacingAndGlyphs">/1.8</text><text class="m" x="597.5" y="347.3" font-size="7.3" fill="#222" text-anchor="start" textLength="4.4" lengthAdjust="spacingAndGlyphs">N</text><path d="M593.5 348.0L596 349.5L593.5 351.0" stroke="#1a1a1a" stroke-width="0.8" fill="none"/><text class="m" x="571" y="371.3" font-size="7.3" fill="#6d6d6d" text-anchor="start" textLength="17.5" lengthAdjust="spacingAndGlyphs">/1.3</text><text class="m" x="597.5" y="366.3" font-size="7.3" fill="#222" text-anchor="start" textLength="8.8" lengthAdjust="spacingAndGlyphs">N1</text><path d="M593.5 367.0L596 368.5L593.5 370.0" stroke="#1a1a1a" stroke-width="0.8" fill="none"/><path d="M596 274.5H635.5 M638.5 274.5H1415.5 M638.5 274.5L635.5 278.0 M635.5 276.5V641.4" stroke="#1a1a1a" stroke-width="1" fill="none"/><path d="M1411 273.0L1413.5 274.5L1411 276.0Z" fill="#1a1a1a"/><path d="M596 293.5H654.5 M657.5 293.5H1415.5 M657.5 293.5L654.5 297.0 M654.5 295.5V641.4" stroke="#1a1a1a" stroke-width="1" fill="none"/><path d="M1411 292.0L1413.5 293.5L1411 295.0Z" fill="#1a1a1a"/><path d="M596 311.5H672.5 M675.5 311.5H1415.5 M675.5 311.5L672.5 315.0 M672.5 313.5V641.4" stroke="#1a1a1a" stroke-width="1" fill="none"/><path d="M1411 310.0L1413.5 311.5L1411 313.0Z" fill="#1a1a1a"/><text class="m" x="1407.5" y="272.3" font-size="7.3" fill="#222" text-anchor="start" textLength="8.8" lengthAdjust="spacingAndGlyphs">L1</text><text class="m" x="1421.5" y="277.5" font-size="7.3" fill="#6d6d6d" text-anchor="start" textLength="17.5" lengthAdjust="spacingAndGlyphs">/3.2</text><text class="m" x="1407.5" y="291.3" font-size="7.3" fill="#222" text-anchor="start" textLength="8.8" lengthAdjust="spacingAndGlyphs">L2</text><text class="m" x="1421.5" y="296.5" font-size="7.3" fill="#6d6d6d" text-anchor="start" textLength="17.5" lengthAdjust="spacingAndGlyphs">/3.2</text><text class="m" x="1407.5" y="309.3" font-size="7.3" fill="#222" text-anchor="start" textLength="8.8" lengthAdjust="spacingAndGlyphs">L3</text><text class="m" x="1421.5" y="314.5" font-size="7.3" fill="#6d6d6d" text-anchor="start" textLength="17.5" lengthAdjust="spacingAndGlyphs">/3.2</text><path d="M596 330.5H992.5 M992.5 333V631 M996 537.5H1565" stroke="#e8921a" stroke-width="1.1" fill="none"/><path d="M990 330.5H992.5V334 M992.5 541L996 537.5" stroke="#1a1a1a" stroke-width="0.9" fill="none"/><path d="M596 349.5H1565 M596 368.5H738.5V641.4" stroke="#2a8fd0" stroke-width="1.1" fill="none"/><path d="M735 368.5H738.5V372" stroke="#1a1a1a" stroke-width="0.9" fill="none"/><path d="M953.5 575.5H1565" stroke="#2eaa2e" stroke-width="1.1" stroke-dasharray="9 2 1.5 2" fill="none"/><text class="m" x="929" y="579" font-size="7.3" fill="#6d6d6d" text-anchor="start" textLength="17.5" lengthAdjust="spacingAndGlyphs">/1.5</text><text class="m" x="955" y="573.5" font-size="7.3" fill="#222" text-anchor="start" textLength="9.0" lengthAdjust="spacingAndGlyphs">PE</text><path d="M950.5 574L953 575.4L950.5 577" stroke="#1a1a1a" stroke-width="0.8" fill="none"/><rect x="630.5" y="410.5" width="9.2" height="19" fill="#fff" stroke="#1a1a1a" stroke-width="1"/><path d="M635.5 410.4V429.4" stroke="#1a1a1a" stroke-width="0.8"/><rect x="649.5" y="410.5" width="9.2" height="19" fill="#fff" stroke="#1a1a1a" stroke-width="1"/><path d="M654.5 410.4V429.4" stroke="#1a1a1a" stroke-width="0.8"/><rect x="667.5" y="410.5" width="9.2" height="19" fill="#fff" stroke="#1a1a1a" stroke-width="1"/><path d="M672.5 410.4V429.4" stroke="#1a1a1a" stroke-width="0.8"/><text class="m" transform="translate(632.8 400.8) rotate(-90)" font-size="8" fill="#d93a4c">1</text><text class="m" transform="translate(632.8 443.2) rotate(-90)" font-size="8" fill="#d93a4c">2</text><text class="m" transform="translate(651.8 400.8) rotate(-90)" font-size="8" fill="#d93a4c">3</text><text class="m" transform="translate(651.8 443.2) rotate(-90)" font-size="8" fill="#d93a4c">4</text><text class="m" transform="translate(669.8 400.8) rotate(-90)" font-size="8" fill="#d93a4c">5</text><text class="m" transform="translate(669.8 443.2) rotate(-90)" font-size="8" fill="#d93a4c">6</text><text class="s" x="604" y="416.8" font-size="11.5" fill="#1a1a1a" text-anchor="start" textLength="18.7" lengthAdjust="spacingAndGlyphs">-F1</text><text class="m" x="566" y="429.5" font-size="7.3" fill="#6d6d6d" text-anchor="start" textLength="57.0" lengthAdjust="spacingAndGlyphs">=A1+ST/CE:1.3</text><text class="m" x="614" y="440.5" font-size="7.3" fill="#222" text-anchor="start" textLength="9.0" lengthAdjust="spacingAndGlyphs">4A</text><path d="M635.5 467L639 470.5H719.5V641.4" stroke="#1a1a1a" stroke-width="1" fill="none"/><path d="M708.2 531.5H711.4V528.6H717.2V531.8L719.5 534.2 M709.2 536.4H719.5" stroke="#1a1a1a" stroke-width="0.9" fill="none"/><text class="m" transform="translate(716.8 523.2) rotate(-90)" font-size="8" fill="#d93a4c">1</text><text class="m" transform="translate(716.8 547.2) rotate(-90)" font-size="8" fill="#d93a4c">2</text><text class="s" x="687.5" y="529.5" font-size="11.5" fill="#1a1a1a" text-anchor="start" textLength="18.7" lengthAdjust="spacingAndGlyphs">-F2</text><text class="m" x="649" y="542.5" font-size="7.3" fill="#6d6d6d" text-anchor="start" textLength="57.0" lengthAdjust="spacingAndGlyphs">=A1+ST/CE:1.3</text><text class="m" x="684" y="554" font-size="7.3" fill="#222" text-anchor="start" textLength="22.0" lengthAdjust="spacingAndGlyphs">C0,5A</text><rect x="625.5" y="641.4" width="264" height="66" fill="#fff" stroke="#1a1a1a" stroke-width="1.1"/><path d="M625.5 660.3H748.6V641.4 M757.8 641.4V660.3H889.5 M625.5 688.4H738.6V707.4 M785.3 707.4V688.4H823.8V707.4" stroke="#0c0c0c" stroke-width="1.15" fill="none" stroke-dasharray="3.6 2"/><text class="m" x="676.5" y="654" font-size="7" fill="#222" text-anchor="start" textLength="12.5" lengthAdjust="spacingAndGlyphs">-X2</text><text class="m" x="817.5" y="654" font-size="7" fill="#222" text-anchor="start" textLength="12.5" lengthAdjust="spacingAndGlyphs">-X4</text><text class="m" x="676.5" y="701" font-size="7" fill="#222" text-anchor="start" textLength="12.5" lengthAdjust="spacingAndGlyphs">-X1</text><text class="m" x="799" y="701" font-size="7" fill="#222" text-anchor="start" textLength="12.5" lengthAdjust="spacingAndGlyphs">-X3</text><text class="s" x="634.4" y="680" font-size="13.3" fill="#22918f" text-anchor="start" textLength="55.3" lengthAdjust="spacingAndGlyphs" font-weight="bold">SIEMENS</text><text class="m" x="700.7" y="679.5" font-size="7" fill="#333" text-anchor="start" textLength="31.0" lengthAdjust="spacingAndGlyphs">PAC4200</text><text class="s" x="604.4" y="671" font-size="11.5" fill="#1a1a1a" text-anchor="start" textLength="18.3" lengthAdjust="spacingAndGlyphs">-P1</text><text class="m" x="566" y="684.5" font-size="7.3" fill="#6d6d6d" text-anchor="start" textLength="57.0" lengthAdjust="spacingAndGlyphs">=A1+ST/CE:1.5</text><text class="m" x="575" y="695.5" font-size="7.3" fill="#6d6d6d" text-anchor="start" textLength="48.0" lengthAdjust="spacingAndGlyphs">/EE1pol:1.6</text><text class="m" transform="translate(633.0 636.5) rotate(-90)" font-size="6.8" fill="#e8353a" textLength="8.6" lengthAdjust="spacingAndGlyphs">V1</text><text class="m" transform="translate(652.0 636.5) rotate(-90)" font-size="6.8" fill="#e8353a" textLength="8.6" lengthAdjust="spacingAndGlyphs">V2</text><text class="m" transform="translate(670.0 636.5) rotate(-90)" font-size="6.8" fill="#e8353a" textLength="8.6" lengthAdjust="spacingAndGlyphs">V3</text><text class="m" transform="translate(689.0 636.5) rotate(-90)" font-size="6.8" fill="#e8353a" textLength="8.6" lengthAdjust="spacingAndGlyphs">VN</text><path d="M691.5 632V641.4" stroke="#1a1a1a" stroke-width="1" fill="none"/><text class="m" transform="translate(717.0 636.5) rotate(-90)" font-size="6.8" fill="#e8353a" textLength="12.9" lengthAdjust="spacingAndGlyphs">L/+</text><text class="m" transform="translate(736.0 636.5) rotate(-90)" font-size="6.8" fill="#e8353a" textLength="12.9" lengthAdjust="spacingAndGlyphs">N/-</text><text class="m" transform="translate(764.0 636.5) rotate(-90)" font-size="6.8" fill="#e8353a" textLength="8.6" lengthAdjust="spacingAndGlyphs">FE</text><path d="M766.5 632V641.4" stroke="#1a1a1a" stroke-width="1" fill="none"/><text class="m" transform="translate(783.0 636.5) rotate(-90)" font-size="6.8" fill="#e8353a" textLength="12.9" lengthAdjust="spacingAndGlyphs">DIC</text><path d="M785.5 632V641.4" stroke="#1a1a1a" stroke-width="1" fill="none"/><text class="m" transform="translate(802.0 636.5) rotate(-90)" font-size="6.8" fill="#e8353a" textLength="12.9" lengthAdjust="spacingAndGlyphs">DI1</text><path d="M804.5 632V641.4" stroke="#1a1a1a" stroke-width="1" fill="none"/><text class="m" transform="translate(821.0 636.5) rotate(-90)" font-size="6.8" fill="#e8353a" textLength="12.9" lengthAdjust="spacingAndGlyphs">DI0</text><path d="M823.5 632V641.4" stroke="#1a1a1a" stroke-width="1" fill="none"/><text class="m" transform="translate(840.0 636.5) rotate(-90)" font-size="6.8" fill="#e8353a" textLength="12.9" lengthAdjust="spacingAndGlyphs">DOC</text><path d="M842.5 632V641.4" stroke="#1a1a1a" stroke-width="1" fill="none"/><text class="m" transform="translate(859.0 636.5) rotate(-90)" font-size="6.8" fill="#e8353a" textLength="12.9" lengthAdjust="spacingAndGlyphs">DO1</text><path d="M861.5 632V641.4" stroke="#1a1a1a" stroke-width="1" fill="none"/><text class="m" transform="translate(878.0 636.5) rotate(-90)" font-size="6.8" fill="#e8353a" textLength="12.9" lengthAdjust="spacingAndGlyphs">DO0</text><path d="M880.5 632V641.4" stroke="#1a1a1a" stroke-width="1" fill="none"/><path d="M635.5 707.4V763.5H596" stroke="#8a4513" stroke-width="1" fill="none"/><text class="m" transform="translate(633.0 733.5) rotate(-90)" font-size="6.8" fill="#e8353a" textLength="22.0" lengthAdjust="spacingAndGlyphs">IL1/k</text><text class="m" x="571" y="766.7" font-size="7.3" fill="#6d6d6d" text-anchor="start" textLength="17.5" lengthAdjust="spacingAndGlyphs">/1.8</text><text class="m" x="597.5" y="761.3" font-size="7.3" fill="#222" text-anchor="start" textLength="13.0" lengthAdjust="spacingAndGlyphs">I1+</text><path d="M593.5 762.0L596 763.5L593.5 765.0" stroke="#1a1a1a" stroke-width="0.8" fill="none"/><path d="M654.5 707.4V782.5H596" stroke="#8a4513" stroke-width="1" fill="none"/><text class="m" transform="translate(652.0 733.5) rotate(-90)" font-size="6.8" fill="#e8353a" textLength="22.0" lengthAdjust="spacingAndGlyphs">IL1/l</text><text class="m" x="571" y="785.7" font-size="7.3" fill="#6d6d6d" text-anchor="start" textLength="17.5" lengthAdjust="spacingAndGlyphs">/1.8</text><text class="m" x="597.5" y="780.3" font-size="7.3" fill="#222" text-anchor="start" textLength="13.0" lengthAdjust="spacingAndGlyphs">I1-</text><path d="M593.5 781.0L596 782.5L593.5 784.0" stroke="#1a1a1a" stroke-width="0.8" fill="none"/><path d="M672.5 707.4V801.5H596" stroke="#8a4513" stroke-width="1" fill="none"/><text class="m" transform="translate(670.0 733.5) rotate(-90)" font-size="6.8" fill="#e8353a" textLength="22.0" lengthAdjust="spacingAndGlyphs">IL2/k</text><text class="m" x="571" y="804.7" font-size="7.3" fill="#6d6d6d" text-anchor="start" textLength="17.5" lengthAdjust="spacingAndGlyphs">/1.8</text><text class="m" x="597.5" y="799.3" font-size="7.3" fill="#222" text-anchor="start" textLength="13.0" lengthAdjust="spacingAndGlyphs">I2+</text><path d="M593.5 800.0L596 801.5L593.5 803.0" stroke="#1a1a1a" stroke-width="0.8" fill="none"/><path d="M691.5 707.4V820.5H596" stroke="#8a4513" stroke-width="1" fill="none"/><text class="m" transform="translate(689.0 733.5) rotate(-90)" font-size="6.8" fill="#e8353a" textLength="22.0" lengthAdjust="spacingAndGlyphs">IL2/l</text><text class="m" x="571" y="823.7" font-size="7.3" fill="#6d6d6d" text-anchor="start" textLength="17.5" lengthAdjust="spacingAndGlyphs">/1.8</text><text class="m" x="597.5" y="818.3" font-size="7.3" fill="#222" text-anchor="start" textLength="13.0" lengthAdjust="spacingAndGlyphs">I2-</text><path d="M593.5 819.0L596 820.5L593.5 822.0" stroke="#1a1a1a" stroke-width="0.8" fill="none"/><path d="M710.5 707.4V838.5H596" stroke="#8a4513" stroke-width="1" fill="none"/><text class="m" transform="translate(708.0 733.5) rotate(-90)" font-size="6.8" fill="#e8353a" textLength="22.0" lengthAdjust="spacingAndGlyphs">IL3/k</text><text class="m" x="571" y="841.7" font-size="7.3" fill="#6d6d6d" text-anchor="start" textLength="17.5" lengthAdjust="spacingAndGlyphs">/1.8</text><text class="m" x="597.5" y="836.3" font-size="7.3" fill="#222" text-anchor="start" textLength="13.0" lengthAdjust="spacingAndGlyphs">I3+</text><path d="M593.5 837.0L596 838.5L593.5 840.0" stroke="#1a1a1a" stroke-width="0.8" fill="none"/><path d="M729.5 707.4V857.5H596" stroke="#8a4513" stroke-width="1" fill="none"/><text class="m" transform="translate(727.0 733.5) rotate(-90)" font-size="6.8" fill="#e8353a" textLength="22.0" lengthAdjust="spacingAndGlyphs">IL3/l</text><text class="m" x="571" y="860.7" font-size="7.3" fill="#6d6d6d" text-anchor="start" textLength="17.5" lengthAdjust="spacingAndGlyphs">/1.8</text><text class="m" x="597.5" y="855.3" font-size="7.3" fill="#222" text-anchor="start" textLength="13.0" lengthAdjust="spacingAndGlyphs">I3-</text><path d="M593.5 856.0L596 857.5L593.5 859.0" stroke="#1a1a1a" stroke-width="0.8" fill="none"/><path d="M804.5 707.4V820.4" stroke="#1a1a1a" stroke-width="1" fill="none"/><text class="m" transform="translate(801.8 725) rotate(-90)" font-size="6.8" fill="#e8353a" textLength="13.0" lengthAdjust="spacingAndGlyphs">LAN</text><path d="M799 767.5L807 759.5 M800 763.5H813" stroke="#1a1a1a" stroke-width="0.8" fill="none"/><text class="s" x="771" y="764" font-size="11.5" fill="#1a1a1a" text-anchor="start" textLength="24.4" lengthAdjust="spacingAndGlyphs">-PN8</text><text class="m" x="751" y="773.5" font-size="7.3" fill="#222" text-anchor="start" textLength="44.0" lengthAdjust="spacingAndGlyphs">Patchkabel</text><text class="m" transform="translate(802 820) rotate(-90)" font-size="6.8" fill="#333" textLength="13.0" lengthAdjust="spacingAndGlyphs">PN8</text><text class="m" transform="translate(808.5 851.5) rotate(-90)" font-size="7.3" fill="#6d6d6d" textLength="22.0" lengthAdjust="spacingAndGlyphs">/15.6</text><path d="M992.5 631V639 M992.5 644V651.5" stroke="#1a1a1a" stroke-width="1" fill="none"/><circle cx="992.5" cy="641.4" r="2.2" fill="#fff" stroke="#1a1a1a" stroke-width="0.9"/><text class="s" x="962.5" y="638.3" font-size="11.5" fill="#1a1a1a" text-anchor="start" textLength="24.5" lengthAdjust="spacingAndGlyphs">-XS1</text><text class="m" transform="translate(989.8 651.5) rotate(-90)" font-size="8" fill="#d93a4c">1</text><text class="s" x="965.6" y="698.3" font-size="11.5" fill="#1a1a1a" text-anchor="start" textLength="18.4" lengthAdjust="spacingAndGlyphs">-W2</text><path d="M988.5 703L997 694" stroke="#1a1a1a" stroke-width="0.8"/><text class="m" transform="translate(990 696.5) rotate(-90)" font-size="8" fill="#d93a4c">1</text><text class="m" x="984" y="707" font-size="7.3" fill="#222" text-anchor="end" textLength="48.4" lengthAdjust="spacingAndGlyphs">Einspeisung</text><text class="m" x="984" y="716.3" font-size="7.3" fill="#222" text-anchor="end" textLength="30.8" lengthAdjust="spacingAndGlyphs">3-polig</text><text class="m" x="984" y="725.6" font-size="7.3" fill="#222" text-anchor="end" textLength="30.8" lengthAdjust="spacingAndGlyphs">0-240 V</text><text class="m" x="984" y="735" font-size="7.3" fill="#222" text-anchor="end" textLength="44.0" lengthAdjust="spacingAndGlyphs">L: 3000 mm</text><text class="m" x="625.8" y="915" font-size="7.3" fill="#222" text-anchor="start" textLength="61.7" lengthAdjust="spacingAndGlyphs">Energiemessung</text><text class="m" x="984" y="915" font-size="7.3" fill="#222" text-anchor="start" textLength="105.0" lengthAdjust="spacingAndGlyphs">Schaltschrankbeleuchtung</text><text class="m" x="1209.3" y="915" font-size="7.3" fill="#222" text-anchor="start" textLength="70.3" lengthAdjust="spacingAndGlyphs">Servicesteckdose</text><text class="m" x="1341" y="915" font-size="7.3" fill="#222" text-anchor="start" textLength="39.5" lengthAdjust="spacingAndGlyphs">Zuleitung</text><text class="m" x="1341" y="924.5" font-size="7.3" fill="#222" text-anchor="start" textLength="70.3" lengthAdjust="spacingAndGlyphs">Servicesteckdose</text><text class="m" x="1341" y="934" font-size="7.3" fill="#222" text-anchor="start" textLength="44.0" lengthAdjust="spacingAndGlyphs">Bedienpult</text><text class="m" x="471.5" y="942" font-size="7.3" fill="#333" text-anchor="start" textLength="13.0" lengthAdjust="spacingAndGlyphs">von</text><text class="m" x="491" y="942" font-size="7.3" fill="#333" text-anchor="start">1</text><text class="m" x="1457.5" y="942" font-size="7.3" fill="#333" text-anchor="start" textLength="17.5" lengthAdjust="spacingAndGlyphs">nach</text><text class="m" x="1483.5" y="942" font-size="7.3" fill="#333" text-anchor="start">3</text><path d="M460.5 951.5H1551.5 M460.5 966.4H781.3 M460.5 980.5H781.3 M460.5 994.5H781.3 M507.2 951.5V1008.5 M582.4 951.5V1008.5 M620.6 951.5V1008.5 M648.4 951.5V1008.5 M697.6 951.5V1008.5 M781.3 951.5V1008.5 M934.4 951.5V1008.5 M1081.3 951.5V1008.5 M1222.5 951.5V1008.5 M1354.5 951.5V980.5 M1420.5 951.5V980.5 M1354.5 966.4H1551.5 M1222.5 980.5H1551.5 M1386.6 980.5V1008.5 M1483.4 980.5V1008.5 M1483.4 994.5H1551.5" stroke="#1a1a1a" stroke-width="1" fill="none"/><text class="m" x="651.8" y="961.8" font-size="7.3" fill="#4a4a4a" text-anchor="start" textLength="22.0" lengthAdjust="spacingAndGlyphs">Datum</text><text class="m" x="699.7" y="963.8" font-size="7.3" fill="#4a4a4a" text-anchor="start" textLength="35.2" lengthAdjust="spacingAndGlyphs">10.10.23</text><text class="m" x="651.8" y="976" font-size="7.3" fill="#4a4a4a" text-anchor="start" textLength="26.4" lengthAdjust="spacingAndGlyphs">Bearb.</text><text class="m" x="699.7" y="978" font-size="7.3" fill="#777" text-anchor="start" textLength="22.0" lengthAdjust="spacingAndGlyphs">Huwer</text><text class="m" x="651.8" y="989.5" font-size="7.3" fill="#4a4a4a" text-anchor="start" textLength="22.0" lengthAdjust="spacingAndGlyphs">Gepr.</text><text class="m" x="651.8" y="1003.3" font-size="7.3" fill="#4a4a4a" text-anchor="start" textLength="17.6" lengthAdjust="spacingAndGlyphs">Norm</text><text class="m" x="699.7" y="1005.3" font-size="7.3" fill="#4a4a4a" text-anchor="start" textLength="39.6" lengthAdjust="spacingAndGlyphs">DIN 81346</text><text class="m" x="468" y="1003.3" font-size="7.3" fill="#4a4a4a" text-anchor="start" textLength="31.0" lengthAdjust="spacingAndGlyphs">Zustand</text><text class="m" x="528" y="1003.3" font-size="7.3" fill="#4a4a4a" text-anchor="start" textLength="35.5" lengthAdjust="spacingAndGlyphs">Änderung</text><text class="m" x="589.7" y="1003.3" font-size="7.3" fill="#4a4a4a" text-anchor="start" textLength="22.0" lengthAdjust="spacingAndGlyphs">Datum</text><text class="m" x="625.2" y="1003.3" font-size="7.3" fill="#4a4a4a" text-anchor="start" textLength="17.5" lengthAdjust="spacingAndGlyphs">Name</text><text class="m" x="783" y="961" font-size="7.3" fill="#4a4a4a" text-anchor="start" textLength="53.0" lengthAdjust="spacingAndGlyphs">DEMO Projekt</text><text class="m" x="1084.3" y="961" font-size="7.3" fill="#4a4a4a" text-anchor="start" textLength="61.6" lengthAdjust="spacingAndGlyphs">Energiemessung</text><text class="m" x="1084.3" y="970.3" font-size="7.3" fill="#4a4a4a" text-anchor="start" textLength="105.6" lengthAdjust="spacingAndGlyphs">Schaltschrankbeleuchtung</text><text class="m" x="1084.3" y="979.7" font-size="7.3" fill="#4a4a4a" text-anchor="start" textLength="70.4" lengthAdjust="spacingAndGlyphs">Servicesteckdose</text><text class="m" x="1225" y="961.5" font-size="7.3" fill="#4a4a4a" text-anchor="start" textLength="61.5" lengthAdjust="spacingAndGlyphs">Projekt-Nummer</text><text class="m" x="1358.8" y="961.5" font-size="7.3" fill="#4a4a4a" text-anchor="start" textLength="26.5" lengthAdjust="spacingAndGlyphs">Anlage</text><text class="m" x="1423" y="964.5" font-size="7.3" fill="#4a4a4a" text-anchor="start" textLength="13.0" lengthAdjust="spacingAndGlyphs">=A1</text><text class="m" x="1358.8" y="975.5" font-size="7.3" fill="#4a4a4a" text-anchor="start" textLength="13.0" lengthAdjust="spacingAndGlyphs">Ort</text><text class="m" x="1423" y="978.5" font-size="7.3" fill="#4a4a4a" text-anchor="start" textLength="13.0" lengthAdjust="spacingAndGlyphs">+ST</text><text class="m" x="1226" y="989.5" font-size="7.3" fill="#4a4a4a" text-anchor="start" textLength="70.0" lengthAdjust="spacingAndGlyphs">Zeichnungsnummer</text><text class="m" x="1226" y="1003.3" font-size="7.3" fill="#4a4a4a" text-anchor="start" textLength="31.0" lengthAdjust="spacingAndGlyphs">10/2023</text><text class="m" x="1390.5" y="1003.3" font-size="7.3" fill="#4a4a4a" text-anchor="start" textLength="17.5" lengthAdjust="spacingAndGlyphs">&amp;EFS</text><text class="m" x="1486" y="991.5" font-size="7.3" fill="#4a4a4a" text-anchor="start" textLength="22.0" lengthAdjust="spacingAndGlyphs">Blatt</text><text class="m" x="1549" y="993" font-size="7.3" fill="#4a4a4a" text-anchor="end">2</text><text class="m" x="1486" y="1004" font-size="7.3" fill="#4a4a4a" text-anchor="start" textLength="13.0" lengthAdjust="spacingAndGlyphs">von</text><text class="m" x="1549" y="1006" font-size="7.3" fill="#4a4a4a" text-anchor="end" textLength="13.0" lengthAdjust="spacingAndGlyphs">155</text><g><text class="s" x="938.7" y="974.6" font-size="10.6" font-weight="bold" fill="#17283d" textLength="26.7" lengthAdjust="spacingAndGlyphs">WS</text><path d="M941.5 976.6H1068" stroke="#f8e070" stroke-width="2.1"/><path d="M946 978.7H1068" stroke="#f6d445" stroke-width="2.1"/><path d="M950 980.8H1068" stroke="#f4c726" stroke-width="2.1"/><path d="M954 982.9H1068" stroke="#f1b810" stroke-width="2.1"/><path d="M1001.7 967H973.5Q968 967 968 972.5V988.2Q968 993.75 973.5 993.75H1001.7V987.5H978Q975.4 987.5 975.4 985V975.4Q975.4 972.9 978 972.9H1001.7Z" fill="#17283d"/><path d="M1002 993.75L1015.8 967H1030L1042 993.75H1031L1022.9 975.5L1013.3 993.75Z" fill="#17283d"/><path d="M1042.5 967H1071.2Q1076.7 967 1076.7 972.5V988.2Q1076.7 993.75 1071.2 993.75H1045V987.5H1066Q1068.6 987.5 1068.6 985V975.4Q1068.6 972.9 1066 972.9H1042.5Z" fill="#17283d"/><path d="M1025 978.7H1036" stroke="#f6d445" stroke-width="1.3"/><path d="M1025 980.8H1036" stroke="#f4c726" stroke-width="1.3"/></g></svg>
<div class="b" style="left:1580px;top:143px;width:336px;height:520px;background:#303c48;"></div>
<div class="b" style="left:1580px;top:143px;width:336px;height:29px;background:#3a4651;"></div>
<svg class="b" style="left:1585px;top:148px" width="22" height="20" viewBox="0 0 22 20"><path d="M7.5 2.2Q9 6.5 13.3 8Q9 9.5 7.5 13.8Q6 9.5 1.7 8Q6 6.5 7.5 2.2Z" fill="#f6c313" stroke="#f6c313" stroke-width="0.8" stroke-linejoin="round"/><path d="M13.5 10Q14.4 12.6 17 13.5Q14.4 14.4 13.5 17Q12.6 14.4 10 13.5Q12.6 12.6 13.5 10Z" fill="#f6c313" stroke="#f6c313" stroke-width="0.7" stroke-linejoin="round"/><circle cx="15.2" cy="4" r="1.3" fill="#b8c832"/></svg>
<div class="t" style="left:1616px;top:148.5px;font-size:12.5px;line-height:17px;color:#f4f6f8;letter-spacing:-0.607px;">AI Copilot (beta)</div>
<svg class="b" style="left:1842px;top:149px" width="70" height="16" viewBox="0 0 70 16"><path d="M3 5.5L8 10.5L13 5.5" fill="none" stroke="#fff" stroke-width="1.6"/><path d="M31 2.5H37M32 2.5V8.5M36.4 2.5V8.5M29 8.8H39M34 9V14" fill="none" stroke="#fff" stroke-width="1.3"/><path d="M55.5 3L65 12.5M65 3L55.5 12.5" fill="none" stroke="#fff" stroke-width="2"/></svg>
<div class="b" style="left:1795px;top:182px;width:98px;height:23px;background:#fcc40d;border-radius:11.5px;"></div>
<div class="t" style="left:1804px;top:185px;font-size:14px;line-height:17px;color:#1b2a3a;letter-spacing:-0.698px;">Neues Thema</div>
<div class="b" style="left:1584px;top:211px;width:328px;height:449px;background:#17232f;"></div>
<div class="b" style="left:1891px;top:213px;width:20px;height:370px;background:#2d3a46;"></div>
<div class="b" style="left:1897px;top:235px;width:8px;height:157px;background:#78838d;"></div>
<svg class="b" style="left:1891px;top:213px" width="20" height="370" viewBox="0 0 20 370"><path d="M6 12L10 7L14 12" fill="none" stroke="#56626d" stroke-width="1"/><path d="M6 357L10 362L14 357" fill="none" stroke="#56626d" stroke-width="1"/></svg>
<div class="b" style="left:1669px;top:214px;width:206px;height:33px;background:#17232f;border:1.5px solid #33404c;border-radius:9px;box-sizing:content-box;"></div>
<div class="t" style="left:1686px;top:223px;font-size:12.5px;line-height:17px;color:#fff;letter-spacing:-0.650px;">Prüfe das aktuelle Projekt auf fehler</div>
<div class="b" style="left:1599px;top:262px;width:161px;height:321px;background:#35424e;border-radius:4px 4px 0 0;"></div>
<svg class="b" style="left:1768px;top:265px" width="16" height="14" viewBox="0 0 16 14"><path d="M3 8V4.5H11.5 M13 6V9.5H4.5" fill="none" stroke="#4d5964" stroke-width="1.3"/><path d="M10.5 2.5L13 4.5L10.5 6.5Z M5.5 7.5L3 9.5L5.5 11.5Z" fill="#4d5964"/></svg>
<div class="b" style="left:1618px;top:274px;width:150px;height:309px;overflow:hidden;color:#fff;font-size:14px;line-height:14.75px;white-space:nowrap;letter-spacing:-0.5px"><div style="height:14.75px">Die Prüfung des</div><div style="height:14.75px">aktuellen Projekts</div><div style="height:14.75px">auf Fehler ist</div><div style="height:14.75px">abgeschlossen. Es</div><div style="height:14.75px">wurden insgesamt</div><div style="height:14.75px">334 Fehler gefunden.</div><div style="height:14.75px">Hier sind die Details:</div><div style="height:14.75px"></div><div style="height:14.75px">- <b style="letter-spacing:-0.75px">Coils ohne</b></div><div style="height:14.75px"><b style="letter-spacing:-0.75px">Kontakte</b>: 1 Fehler</div><div style="height:14.75px">- <b style="letter-spacing:-0.75px">Coils mit</b></div><div style="height:14.75px"><b style="letter-spacing:-0.75px">ungenutzten</b></div><div style="height:14.75px"><b style="letter-spacing:-0.75px">Kontakten</b>: 4 Fehler</div><div style="height:14.75px">- <b style="letter-spacing:-0.75px">PLCs nicht</b></div><div style="height:14.75px"><b style="letter-spacing:-0.75px">platziert</b>: 4 Fehler</div><div style="height:14.75px">- <b style="letter-spacing:-0.75px">PLCs ohne Kanäle</b>:</div><div style="height:14.75px">3 Fehler</div><div style="height:14.75px">- <b style="letter-spacing:-0.75px">Offene</b></div><div style="height:14.75px"><b style="letter-spacing:-0.75px">Verbindungen</b>: 18</div><div style="height:14.75px">Fehler</div><div style="height:14.75px">- <b style="letter-spacing:-0.75px">Verbindungen im</b></div></div>
<div class="b" style="left:1590px;top:595px;width:316px;height:35px;background:#303c48;border-radius:2px;"></div>
<div class="t" style="left:1599px;top:604px;font-size:12.5px;line-height:16px;color:#a3adb6;font-style:italic;letter-spacing:-0.107px;">Fragen Sie mich etwas...</div>
<svg class="b" style="left:1877px;top:600px" width="24" height="24" viewBox="0 0 24 24"><circle cx="12" cy="12" r="11.5" fill="#fcc40d"/><path d="M12 6.2L18.2 16.8H5.8Z" fill="none" stroke="#1b2a3a" stroke-width="1.5" stroke-linejoin="round"/><path d="M12 10.5L14.6 15.4L12 14.2L9.4 15.4Z" fill="#1b2a3a"/></svg>
<div class="b" style="left:1588px;top:639px;width:322px;height:18px;overflow:hidden"><div class="t" style="left:1px;top:0px;font-size:12.5px;line-height:17px;color:#98a3ad;font-style:italic;letter-spacing:-0.009px;">Ich bin eine AI und kann Fehler machen. Ergebnisse über</div></div>
<div class="b" style="left:1726px;top:666px;width:42px;height:3px;background:#59606a;border-radius:2px;"></div>
<div class="b" style="left:1580px;top:672px;width:336px;height:379px;background:#303c48;"></div>
<div class="b" style="left:1580px;top:672px;width:336px;height:30px;background:#3a4651;"></div>
<div class="t" style="left:1590px;top:678.5px;font-size:12.5px;line-height:17px;color:#f4f6f8;letter-spacing:-0.746px;">Makro-Explorer</div>
<svg class="b" style="left:1842px;top:678px" width="70" height="16" viewBox="0 0 70 16"><path d="M3 5.5L8 10.5L13 5.5" fill="none" stroke="#fff" stroke-width="1.6"/><path d="M31 2.5H37M32 2.5V8.5M36.4 2.5V8.5M29 8.8H39M34 9V14" fill="none" stroke="#fff" stroke-width="1.3"/><path d="M55.5 3L65 12.5M65 3L55.5 12.5" fill="none" stroke="#fff" stroke-width="2"/></svg>
<svg class="b" style="left:1590px;top:706px" width="130" height="32" viewBox="0 0 130 32"><path d="M8 13H15.5L11.75 18.5Z" fill="#fff"/><path d="M32.5 7.5H38.5L40 9.5H47.5V20.5H32.5Z" fill="none" stroke="#fff" stroke-width="1.2"/><path d="M35 12.5H45.5M35 15H45.5M35 17.5H45.5" stroke="#fff" stroke-width="1.1"/><path d="M50 12V23H36" fill="none" stroke="#fff" stroke-width="1.1"/><path d="M77 10.5A7 7 0 1 0 79.6 16" fill="none" stroke="#dfe3e6" stroke-width="1.3"/><path d="M74.5 8L80.8 7.8L79 13.5Z" fill="#fff"/><path d="M93.5 19V6.5H103 M96.5 22V9.5H106" fill="none" stroke="#fff" stroke-width="1.1"/><rect x="99.5" y="12.5" width="10.5" height="10.5" fill="none" stroke="#fff" stroke-width="1.2"/><path d="M102 17.8H107.5" stroke="#fff" stroke-width="1.2"/></svg>
<div class="b" style="left:1709px;top:709px;width:1px;height:25px;background:#cfd4d9;"></div>
<div class="t" style="left:1719px;top:714px;font-size:12.5px;line-height:16px;color:#fff;letter-spacing:-0.464px;">Filter:</div>
<div class="b" style="left:1754px;top:712px;width:158px;height:20px;background:#1c2936;"></div>
<div class="b" style="left:1761px;top:714px;width:16px;height:16px;background:#f59c0c;"></div>
<div class="t" style="left:1766px;top:716px;font-size:11px;line-height:13px;color:#5a4a2a;">1</div>
<div class="t" style="left:1787.5px;top:714px;font-size:12.5px;line-height:16px;color:#fff;letter-spacing:-0.838px;">Electrical Engineering ...</div>
<div class="b" style="left:1908px;top:721px;width:1.5px;height:1.5px;background:#fff;"></div>
<div class="b" style="left:1585px;top:740px;width:308px;height:284px;background:#333f4a;"></div>
<div class="b" style="left:1893px;top:740px;width:17px;height:284px;background:#eef1f5;"></div>
<div class="b" style="left:1901.3px;top:757px;width:1.4px;height:126px;background:#878b92;"></div>
<svg class="b" style="left:0;top:0" width="1920" height="1080" viewBox="0 0 1920 1080"><path d="M1602 751.5H1610 M1616.5 760V851 M1616.5 771.5H1626 M1616.5 791.5H1626 M1621 811.5H1626 M1621 831.5H1626 M1621 851.5H1626" stroke="#9aa3ab" stroke-width="1" stroke-dasharray="1 1.5" fill="none"/><path d="M1635.5 860V1024 M1640 871.5H1648" stroke="#9aa3ab" stroke-width="1" stroke-dasharray="1 1.5" fill="none"/><path d="M1654.5 880V1024 M1659 891.5H1667 M1654.5 911.5H1667 M1659 931.5H1667 M1654.5 1011.5H1667" stroke="#9aa3ab" stroke-width="1" stroke-dasharray="1 1.5" fill="none"/><path d="M1673.5 940V991 M1673.5 951.5H1686 M1673.5 971.5H1686 M1673.5 991.5H1686" stroke="#9aa3ab" stroke-width="1" stroke-dasharray="1 1.5" fill="none"/><rect x="1646" y="822" width="62" height="18" fill="#1c2936"/><g transform="translate(1616 751.5)"><path d="M-4.5 -3.5H-0.5L0.5 -2H4.5V4H-4.5Z" fill="none" stroke="#fff" stroke-width="1.2"/><path d="M-2.5 0.2H4.5" stroke="#fff" stroke-width="1.1"/><path d="M-2.5 0.2V4" stroke="#fff" stroke-width="1.1"/></g><rect x="1593.0" y="747.0" width="9" height="9" fill="#e9edf1" stroke="#9aa3ac" stroke-width="1"/><path d="M1595.0 751.5H1600.0" stroke="#222" stroke-width="1.2"/><g transform="translate(1635 771)"><rect x="-8" y="-8" width="16" height="16" fill="#f7931e"/><path d="M-5.2 -4.3H-0.8M-5.2 0H-1.2M-5.2 4.3H-0.8M-4.4 -4.3V4.3 M0.9 -4.3H5.3M0.9 0H4.9M0.9 4.3H5.3M1.7 -4.3V4.3" stroke="#fff" stroke-width="2" fill="none"/></g><g transform="translate(1635 791)"><rect x="-8" y="-8" width="16" height="16" fill="#f7931e"/><path d="M-5.2 -4.3H-0.8M-5.2 0H-1.2M-5.2 4.3H-0.8M-4.4 -4.3V4.3 M0.9 -4.3H5.3M0.9 0H4.9M0.9 4.3H5.3M1.7 -4.3V4.3" stroke="#fff" stroke-width="2" fill="none"/></g><text x="1627" y="814" font-size="7.5" font-weight="bold" fill="#e0161b" textLength="15">PNII</text><rect x="1612.0" y="807.0" width="9" height="9" fill="#e9edf1" stroke="#9aa3ac" stroke-width="1"/><path d="M1614.0 811.5H1619.0" stroke="#222" stroke-width="1.2"/><path d="M1616.5 809.0V814.0" stroke="#222" stroke-width="1.2"/><rect x="1627" y="823" width="16" height="16" fill="#fff"/><path d="M1627 831.5L1635 824L1643 831.5H1640.5V839H1636.5V834H1633.5V839H1629.5V831.5Z" fill="#000"/><rect x="1612.0" y="827.0" width="9" height="9" fill="#e9edf1" stroke="#9aa3ac" stroke-width="1"/><path d="M1614.0 831.5H1619.0" stroke="#222" stroke-width="1.2"/><path d="M1616.5 829.0V834.0" stroke="#222" stroke-width="1.2"/><g transform="translate(1635 851)"><rect x="-8" y="-8" width="16" height="16" fill="#f7931e"/><path d="M-5.2 -4.3H-0.8M-5.2 0H-1.2M-5.2 4.3H-0.8M-4.4 -4.3V4.3 M0.9 -4.3H5.3M0.9 0H4.9M0.9 4.3H5.3M1.7 -4.3V4.3" stroke="#fff" stroke-width="2" fill="none"/></g><rect x="1612.0" y="847.0" width="9" height="9" fill="#e9edf1" stroke="#9aa3ac" stroke-width="1"/><path d="M1614.0 851.5H1619.0" stroke="#222" stroke-width="1.2"/><g transform="translate(1654 871.5)"><path d="M-4.5 -3.5H-0.5L0.5 -2H4.5V4H-4.5Z" fill="none" stroke="#fff" stroke-width="1.2"/><path d="M-2.5 0.2H4.5" stroke="#fff" stroke-width="1.1"/><path d="M-2.5 0.2V4" stroke="#fff" stroke-width="1.1"/></g><rect x="1631.0" y="867.0" width="9" height="9" fill="#e9edf1" stroke="#9aa3ac" stroke-width="1"/><path d="M1633.0 871.5H1638.0" stroke="#222" stroke-width="1.2"/><g transform="translate(1673 891.5)"><path d="M-4.5 -3.5H-0.5L0.5 -2H4.5V4H-4.5Z" fill="none" stroke="#fff" stroke-width="1.2"/><path d="M-2.5 0.2H4.5" stroke="#fff" stroke-width="1.1"/><path d="M-2.5 0.2V4" stroke="#fff" stroke-width="1.1"/></g><rect x="1650.0" y="887.0" width="9" height="9" fill="#e9edf1" stroke="#9aa3ac" stroke-width="1"/><path d="M1652.0 891.5H1657.0" stroke="#222" stroke-width="1.2"/><path d="M1654.5 889.0V894.0" stroke="#222" stroke-width="1.2"/><g transform="translate(1673 911.5)"><path d="M-4.5 -3.5H-0.5L0.5 -2H4.5V4H-4.5Z" fill="none" stroke="#fff" stroke-width="1.2"/><path d="M-2.5 0.2H4.5" stroke="#fff" stroke-width="1.1"/><path d="M-2.5 0.2V4" stroke="#fff" stroke-width="1.1"/></g><g transform="translate(1673 931.5)"><path d="M-4.5 -3.5H-0.5L0.5 -2H4.5V4H-4.5Z" fill="none" stroke="#fff" stroke-width="1.2"/><path d="M-2.5 0.2H4.5" stroke="#fff" stroke-width="1.1"/><path d="M-2.5 0.2V4" stroke="#fff" stroke-width="1.1"/></g><rect x="1650.0" y="927.0" width="9" height="9" fill="#e9edf1" stroke="#9aa3ac" stroke-width="1"/><path d="M1652.0 931.5H1657.0" stroke="#222" stroke-width="1.2"/><g transform="translate(1692 951.5)"><path d="M-4.5 -3.5H-0.5L0.5 -2H4.5V4H-4.5Z" fill="none" stroke="#fff" stroke-width="1.2"/><path d="M-2.5 0.2H4.5" stroke="#fff" stroke-width="1.1"/><path d="M-2.5 0.2V4" stroke="#fff" stroke-width="1.1"/></g><g transform="translate(1692 971.5)"><path d="M-4.5 -3.5H-0.5L0.5 -2H4.5V4H-4.5Z" fill="none" stroke="#fff" stroke-width="1.2"/><path d="M-2.5 0.2H4.5" stroke="#fff" stroke-width="1.1"/><path d="M-2.5 0.2V4" stroke="#fff" stroke-width="1.1"/></g><g transform="translate(1692 991.5)"><path d="M-4.5 -3.5H-0.5L0.5 -2H4.5V4H-4.5Z" fill="none" stroke="#fff" stroke-width="1.2"/><path d="M-2.5 0.2H4.5" stroke="#fff" stroke-width="1.1"/><path d="M-2.5 0.2V4" stroke="#fff" stroke-width="1.1"/></g><g transform="translate(1673 1011.5)"><path d="M-4.5 -3.5H-0.5L0.5 -2H4.5V4H-4.5Z" fill="none" stroke="#fff" stroke-width="1.2"/><path d="M-2.5 0.2H4.5" stroke="#fff" stroke-width="1.1"/><path d="M-2.5 0.2V4" stroke="#fff" stroke-width="1.1"/></g></svg>
<div class="t" style="left:1629px;top:743px;font-size:12.5px;line-height:16px;color:#fff;letter-spacing:-1.146px;">Makro</div>
<div class="t" style="left:1648px;top:763px;font-size:12.5px;line-height:16px;color:#fff;letter-spacing:-0.929px;">Einspeisung und Aussenleiter</div>
<div class="t" style="left:1648px;top:783px;font-size:12.5px;line-height:16px;color:#fff;letter-spacing:-1.039px;">Motorsteuerung</div>
<div class="t" style="left:1648px;top:803px;font-size:12.5px;line-height:16px;color:#fff;letter-spacing:-0.984px;">ProjectWizard</div>
<div class="t" style="left:1648px;top:823px;font-size:12.5px;line-height:16px;color:#fff;letter-spacing:-1.121px;">RAL-RG678</div>
<div class="t" style="left:1648px;top:843px;font-size:12.5px;line-height:16px;color:#fff;letter-spacing:-0.899px;">Verteiler-Makros A4</div>
<div class="t" style="left:1667px;top:863px;font-size:12.5px;line-height:16px;color:#fff;letter-spacing:-1.007px;">Abgang 1-polig</div>
<div class="t" style="left:1686px;top:883px;font-size:12.5px;line-height:16px;color:#fff;letter-spacing:-0.937px;">Ausschalter</div>
<div class="t" style="left:1686px;top:903px;font-size:12.5px;line-height:16px;color:#fff;letter-spacing:-0.876px;">Lasttrennschalter</div>
<div class="t" style="left:1686px;top:923px;font-size:12.5px;line-height:16px;color:#fff;letter-spacing:-0.871px;">Leitungsschutzschalter</div>
<div class="t" style="left:1705px;top:943px;font-size:12.5px;line-height:16px;color:#fff;letter-spacing:-1.452px;">L1</div>
<div class="t" style="left:1705px;top:963px;font-size:12.5px;line-height:16px;color:#fff;letter-spacing:-0.952px;">L2</div>
<div class="t" style="left:1705px;top:983px;font-size:12.5px;line-height:16px;color:#fff;letter-spacing:-0.952px;">L3</div>
<div class="t" style="left:1686px;top:1003px;font-size:12.5px;line-height:16px;color:#fff;letter-spacing:-1.046px;">LS fuer 2pol RCD Sammelschiene</div>
<div class="b" style="left:1580px;top:1027px;width:336px;height:24px;background:#303c48;"></div>
<div class="b" style="left:1687px;top:1027px;width:105px;height:24px;background:#1c2936;"></div>
<div class="b" style="left:1906px;top:1027px;width:10px;height:24px;background:#1a2733;"></div>
<svg class="b" style="left:1580px;top:1027px" width="336" height="24" viewBox="0 0 336 24"><path d="M3 6H6.5V18H10 M6.5 12H10" fill="none" stroke="#c9ced3" stroke-width="1.1"/><circle cx="10.5" cy="7" r="1.8" fill="none" stroke="#c9ced3" stroke-width="1"/><rect x="10" y="10.5" width="3" height="3" fill="none" stroke="#c9ced3" stroke-width="1"/><rect x="10" y="16" width="3" height="3" fill="none" stroke="#c9ced3" stroke-width="1"/><path d="M113 6H116.5V9.5H113Z M118 6H121.5V9.5H118Z M123 6H126.5V9.5H123Z M113 11H116.5V14.5H113Z M118 11H121.5V14.5H118Z M123 11H126.5V14.5H123Z M113 16H116.5V19.5H113Z M118 16H121.5V19.5H118Z" fill="#fff"/><circle cx="124" cy="17.5" r="1.6" fill="none" stroke="#c9ced3" stroke-width="0.9"/><path d="M125.2 18.8L126.8 20.4" stroke="#c9ced3" stroke-width="0.9"/><path d="M219 6H222.5V19H226 M222.5 10H226 M222.5 14.5H226" fill="none" stroke="#c9ced3" stroke-width="1.1"/><circle cx="225" cy="5.5" r="1.6" fill="none" stroke="#c9ced3" stroke-width="0.9"/><path d="M226 9H228.5V11H226Z M226 13.5H228.5V15.5H226Z M226 18H228.5V20H226Z" fill="#e8ebee"/></svg>
<div class="t" style="left:1600px;top:1030px;font-size:12.5px;line-height:17px;color:#fff;letter-spacing:-0.826px;">Symbol-Explorer</div>
<div class="t" style="left:1710px;top:1030px;font-size:12.5px;line-height:17px;color:#fff;letter-spacing:-0.746px;">Makro-Explorer</div>
<div class="t" style="left:1815px;top:1030px;font-size:12.5px;line-height:17px;color:#fff;letter-spacing:-0.598px;">Material-Explorer</div>
<div class="b" style="left:1573.5px;top:577px;width:3px;height:40px;background:#4a5560;"></div>
<div class="b" style="left:436px;top:577px;width:3px;height:40px;background:#4a5560;"></div>
<div class="b" style="left:0px;top:1051px;width:1920px;height:29px;background:#16222e;"></div>
<div class="b" style="left:3px;top:1052px;width:1914px;height:25px;background:#3a4651;"></div>
<div class="t" style="left:10px;top:1056px;font-size:13px;line-height:17px;color:#fff;letter-spacing:-0.455px;">Fertig</div>
<div class="b" style="left:106px;top:1055px;width:1px;height:20px;background:#222e3a;"></div>
<div class="b" style="left:1596px;top:1055px;width:1px;height:20px;background:#222e3a;"></div>
<div class="b" style="left:1697px;top:1055px;width:1px;height:20px;background:#222e3a;"></div>
<div class="b" style="left:1798px;top:1055px;width:1px;height:20px;background:#222e3a;"></div>
<div class="t" style="left:1601px;top:1056px;font-size:13px;line-height:17px;color:#fff;letter-spacing:-1.340px;">94%</div>
<div class="t" style="left:1703px;top:1056px;font-size:13px;line-height:17px;color:#fff;letter-spacing:-0.485px;">136,55/-6,18 mm</div>
<div class="t" style="left:1806px;top:1056px;font-size:13px;line-height:17px;color:#fff;">4</div>
<div class="t" style="left:1819px;top:1056px;font-size:13px;line-height:17px;color:#fff;letter-spacing:-0.531px;">DIN A4</div>
<div class="t" style="left:1863px;top:1056px;font-size:13px;line-height:17px;color:#fff;letter-spacing:-0.691px;">1:1</div>
</body></html>
